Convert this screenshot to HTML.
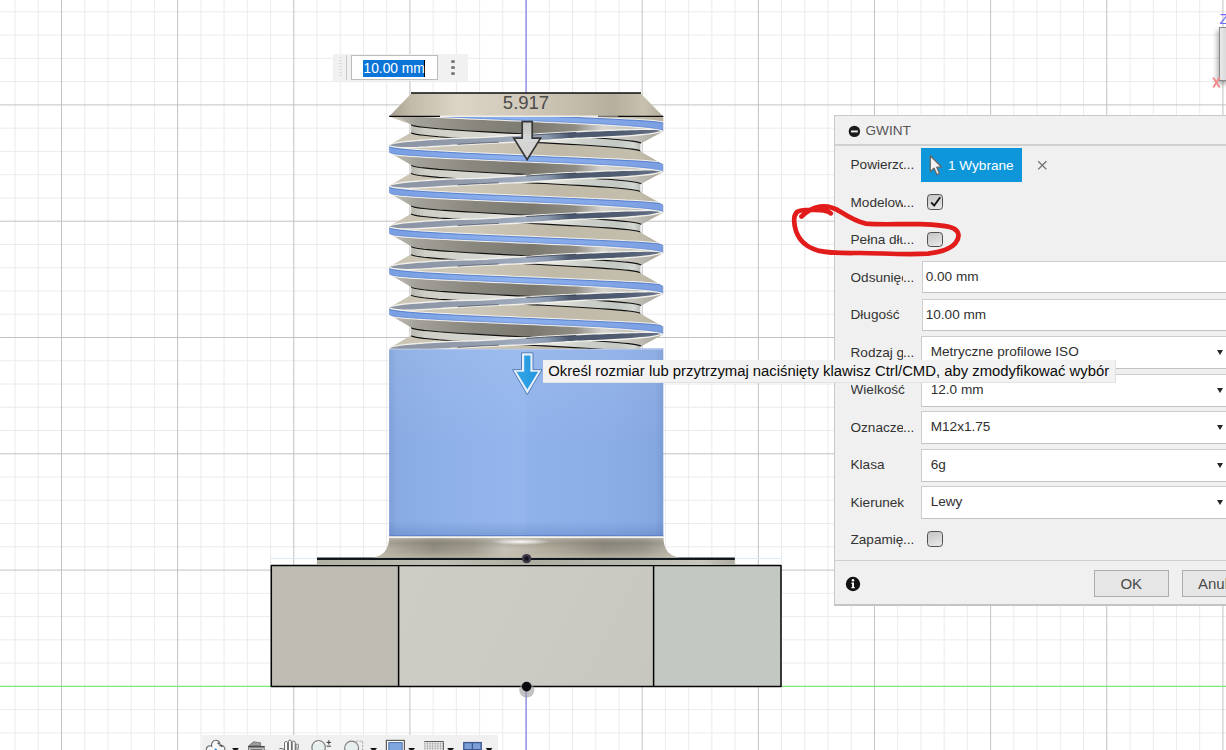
<!DOCTYPE html>
<html><head><meta charset="utf-8"><title>GWINT</title>
<style>
html,body{margin:0;padding:0;width:1226px;height:750px;overflow:hidden;background:#fff;font-family:"Liberation Sans",sans-serif;}
#root{position:relative;width:1226px;height:750px;overflow:hidden;background:#fff}
#scene{position:absolute;left:0;top:0}
.abs{position:absolute}
#dlg{position:absolute;left:834px;top:115px;width:420px;height:488px;background:#f0f0f0;border:1px solid #c9c9c9;border-bottom:2px solid #c4c4c4;box-sizing:content-box}
#dlg .hdr{position:absolute;left:0;top:0;right:0;height:28px;border-bottom:2px solid #d0d0d0}
#dlg .lbl{position:absolute;left:15.5px;font-size:13.6px;color:#333;white-space:nowrap;width:70px;overflow:hidden;line-height:18px;height:18px}
#dlg .clip{display:inline-block;width:52.5px;overflow:hidden;vertical-align:top;height:18px}
#dlg .dots{display:inline-block;vertical-align:top}
#dlg .inp{position:absolute;left:87px;width:340px;height:33px;background:#fff;border:1px solid #cdcdcd;border-bottom:1px solid #c2c2c2;box-sizing:border-box;font-size:13.6px;color:#303030;line-height:30.6px;white-space:nowrap}
#dlg .arr{position:absolute;left:381.6px;width:0;height:0;border-left:3.9px solid transparent;border-right:3.9px solid transparent;border-top:5.6px solid #262626}
.cb{position:absolute;left:92px;width:13.6px;height:13.8px;border:1.3px solid #505050;border-radius:3.6px;background:linear-gradient(160deg,#c4c4c4,#e9e9e9);box-sizing:content-box}
</style></head>
<body>
<div id="root">
<svg id="scene" width="1226" height="750" viewBox="0 0 1226 750">

<defs>
<linearGradient id="gCham" x1="389" x2="663" y1="0" y2="0" gradientUnits="userSpaceOnUse">
 <stop offset="0" stop-color="#a59e8e"/><stop offset="0.08" stop-color="#c2bbaa"/><stop offset="0.25" stop-color="#dcd5c5"/>
 <stop offset="0.5" stop-color="#d0c9b9"/><stop offset="0.68" stop-color="#c4bcab"/><stop offset="0.82" stop-color="#b7af9e"/>
 <stop offset="0.93" stop-color="#c8c1af"/><stop offset="1" stop-color="#b3ac9b"/>
</linearGradient>
<linearGradient id="gBeige" x1="389" x2="663" y1="0" y2="0" gradientUnits="userSpaceOnUse">
 <stop offset="0" stop-color="#c9c2b1"/><stop offset="0.5" stop-color="#c5beac"/><stop offset="1" stop-color="#b9b2a2"/>
</linearGradient>
<linearGradient id="gUp" x1="389" x2="663" y1="0" y2="0" gradientUnits="userSpaceOnUse">
 <stop offset="0" stop-color="#cbc4b3"/><stop offset="0.3" stop-color="#cdc7b8"/><stop offset="0.6" stop-color="#c0b9a8"/><stop offset="0.9" stop-color="#c4bead"/><stop offset="1" stop-color="#b5ae9d"/>
</linearGradient>
<linearGradient id="gLow" x1="389" x2="663" y1="0" y2="0" gradientUnits="userSpaceOnUse">
 <stop offset="0" stop-color="#c2c0b8"/><stop offset="0.1" stop-color="#a3a199"/><stop offset="0.3" stop-color="#8a877f"/><stop offset="0.52" stop-color="#7b7870"/>
 <stop offset="0.68" stop-color="#8f8c84"/><stop offset="0.78" stop-color="#d6d5d0"/><stop offset="0.9" stop-color="#c2c0b8"/><stop offset="1" stop-color="#a5a298"/>
</linearGradient>
<linearGradient id="gRoot" x1="411" x2="641" y1="0" y2="0" gradientUnits="userSpaceOnUse">
 <stop offset="0" stop-color="#b9b8b0"/><stop offset="0.06" stop-color="#cfcfc8"/><stop offset="0.3" stop-color="#d6d6d0"/><stop offset="0.45" stop-color="#eceae5"/><stop offset="0.62" stop-color="#e6e6e1"/><stop offset="0.75" stop-color="#cdd0ca"/><stop offset="0.9" stop-color="#c4c9c3"/><stop offset="0.97" stop-color="#d4d8d3"/><stop offset="1" stop-color="#b4b8b2"/>
</linearGradient>
<linearGradient id="gRH" x1="389" x2="663" y1="0" y2="0" gradientUnits="userSpaceOnUse">
 <stop offset="0" stop-color="#8b94a3"/><stop offset="0.3" stop-color="#929cad"/><stop offset="0.5" stop-color="#a0acbf"/><stop offset="0.58" stop-color="#8a98ae"/>
 <stop offset="0.66" stop-color="#4a576c"/><stop offset="0.85" stop-color="#4f5c72"/><stop offset="1" stop-color="#68758a"/>
</linearGradient>
<linearGradient id="gBlue" x1="389" x2="663" y1="0" y2="0" gradientUnits="userSpaceOnUse">
 <stop offset="0" stop-color="#7a9fe2"/><stop offset="0.45" stop-color="#8db1ee"/><stop offset="1" stop-color="#7b9fe1"/>
</linearGradient>
<linearGradient id="gCyl" x1="389" x2="663" y1="0" y2="0" gradientUnits="userSpaceOnUse">
 <stop offset="0" stop-color="#7e9fd8"/><stop offset="0.03" stop-color="#89abe3"/><stop offset="0.2" stop-color="#8fb1e9"/><stop offset="0.49" stop-color="#94b6ed"/>
 <stop offset="0.51" stop-color="#90b2ea"/><stop offset="0.8" stop-color="#8caee7"/><stop offset="0.97" stop-color="#86a8e1"/><stop offset="1" stop-color="#7b9cd6"/>
</linearGradient>
<linearGradient id="gCylV" x1="0" x2="0" y1="348" y2="536" gradientUnits="userSpaceOnUse">
 <stop offset="0" stop-color="#ffffff" stop-opacity="0.08"/><stop offset="0.5" stop-color="#ffffff" stop-opacity="0"/><stop offset="0.92" stop-color="#2d4f96" stop-opacity="0"/><stop offset="1" stop-color="#2d4f96" stop-opacity="0.22"/>
</linearGradient>
<linearGradient id="gFil" x1="372" x2="680" y1="0" y2="0" gradientUnits="userSpaceOnUse">
 <stop offset="0" stop-color="#cfcabd"/><stop offset="0.08" stop-color="#b2ad9f"/><stop offset="0.2" stop-color="#8d897d"/><stop offset="0.33" stop-color="#a39f92"/>
 <stop offset="0.43" stop-color="#d7d4cb"/><stop offset="0.5" stop-color="#c9c3b4"/><stop offset="0.6" stop-color="#b3ad9e"/><stop offset="0.75" stop-color="#8b877c"/><stop offset="0.88" stop-color="#96938a"/><stop offset="0.96" stop-color="#bdb9ae"/><stop offset="1" stop-color="#d2cec3"/>
</linearGradient>
<linearGradient id="gFilV" x1="0" x2="0" y1="537" y2="558" gradientUnits="userSpaceOnUse">
 <stop offset="0" stop-color="#efece4" stop-opacity="0.95"/><stop offset="0.1" stop-color="#a8a498" stop-opacity="0.5"/><stop offset="0.3" stop-color="#827e74" stop-opacity="0.42"/><stop offset="0.6" stop-color="#a39e90" stop-opacity="0.3"/><stop offset="1" stop-color="#c4bead" stop-opacity="0.78"/>
</linearGradient>
<radialGradient id="gFilH" cx="521" cy="541.8" r="30" gradientUnits="userSpaceOnUse" gradientTransform="translate(521 541.8) scale(1 0.107) translate(-521 -541.8)">
 <stop offset="0" stop-color="#ffffff" stop-opacity="0.95"/><stop offset="0.5" stop-color="#ffffff" stop-opacity="0.5"/><stop offset="1" stop-color="#ffffff" stop-opacity="0"/>
</radialGradient>
<linearGradient id="gFl" x1="317" x2="735" y1="0" y2="0" gradientUnits="userSpaceOnUse">
 <stop offset="0" stop-color="#b3b0a5"/><stop offset="0.3" stop-color="#c1bfb5"/><stop offset="0.5" stop-color="#b0ada2"/><stop offset="0.75" stop-color="#b6b8ae"/><stop offset="0.92" stop-color="#c9c8bd"/><stop offset="1" stop-color="#aeaca2"/>
</linearGradient>
<linearGradient id="gMid" x1="399" x2="653" y1="565" y2="686" gradientUnits="userSpaceOnUse">
 <stop offset="0" stop-color="#cdccc5"/><stop offset="0.5" stop-color="#cbcac3"/><stop offset="1" stop-color="#c8c7bf"/>
</linearGradient>
<linearGradient id="gArr" x1="0" x2="0" y1="121" y2="160" gradientUnits="userSpaceOnUse">
 <stop offset="0" stop-color="#c9c9c9"/><stop offset="0.4" stop-color="#dadada"/><stop offset="1" stop-color="#d2d2d2"/>
</linearGradient>
<linearGradient id="gBArr" x1="512" x2="542" y1="0" y2="0" gradientUnits="userSpaceOnUse">
 <stop offset="0" stop-color="#3aa6e6"/><stop offset="0.5" stop-color="#2b9ee2"/><stop offset="1" stop-color="#2290d6"/>
</linearGradient>
</defs>

<rect width="1226" height="750" fill="#fff"/>
<path d="M15.04 0V750M38.27 0V750M84.73 0V750M107.96 0V750M131.18 0V750M154.41 0V750M200.87 0V750M224.10 0V750M247.32 0V750M270.55 0V750M317.01 0V750M340.24 0V750M363.46 0V750M386.69 0V750M433.15 0V750M456.38 0V750M479.60 0V750M502.83 0V750M549.29 0V750M572.52 0V750M595.74 0V750M618.97 0V750M665.43 0V750M688.66 0V750M711.88 0V750M735.11 0V750M781.57 0V750M804.80 0V750M828.02 0V750M851.25 0V750M897.71 0V750M920.94 0V750M944.16 0V750M967.39 0V750M1013.85 0V750M1037.08 0V750M1060.30 0V750M1083.53 0V750M1129.99 0V750M1153.22 0V750M1176.44 0V750M1199.67 0V750M0 732.92H1226M0 709.66H1226M0 663.14H1226M0 639.88H1226M0 616.62H1226M0 593.36H1226M0 546.84H1226M0 523.58H1226M0 500.32H1226M0 477.06H1226M0 430.54H1226M0 407.28H1226M0 384.02H1226M0 360.76H1226M0 314.24H1226M0 290.98H1226M0 267.72H1226M0 244.46H1226M0 197.94H1226M0 174.68H1226M0 151.42H1226M0 128.16H1226M0 81.64H1226M0 58.38H1226M0 35.12H1226M0 11.86H1226" stroke="#e7e7e7" stroke-width="0.85" fill="none"/>
<path d="M61.50 0V750M177.64 0V750M293.78 0V750M409.92 0V750M526.06 0V750M642.20 0V750M758.34 0V750M874.48 0V750M990.62 0V750M1106.76 0V750M1222.90 0V750M0 686.40H1226M0 570.10H1226M0 453.80H1226M0 337.50H1226M0 221.20H1226M0 104.90H1226" stroke="#bfbfbf" stroke-width="0.95" fill="none"/>
<path d="M0 686.4H1226" stroke="#80ec80" stroke-width="1.15"/>
<path d="M526.1 0V750" stroke="#8888ee" stroke-width="1.2"/>
<path d="M271 558.5H781" stroke="#dcebf9" stroke-width="1.2"/>
<rect x="271" y="565.2" width="127.6" height="121.2" fill="#bfbcb4"/>
<rect x="398.6" y="565.2" width="255" height="121.2" fill="url(#gMid)"/>
<rect x="653.6" y="565.2" width="127.4" height="121.2" fill="#c4c8c2"/>
<path d="M271.3 565.4H781V686.4H271.3ZM398.6 565.4V686.4M653.6 565.4V686.4" fill="none" stroke="#050505" stroke-width="1.5" stroke-linejoin="round"/>
<rect x="317" y="558" width="417.8" height="7" fill="url(#gFl)"/>
<path d="M317 558.7H734.8" stroke="#10181d" stroke-width="2.35"/>
<path d="M389.2 536.5C389.5 549 383 557.6 371 557.6H681.4C669.5 557.6 663 549 663.3 536.5Z" fill="url(#gFil)"/>
<path d="M389.2 536.5C389.5 549 383 557.6 371 557.6H681.4C669.5 557.6 663 549 663.3 536.5Z" fill="url(#gFilV)"/>
<ellipse cx="521" cy="541.8" rx="30" ry="3.2" fill="url(#gFilH)"/>
<rect x="389.1" y="348.2" width="274.2" height="188" fill="url(#gCyl)"/>
<rect x="389.1" y="348.2" width="274.2" height="188" fill="url(#gCylV)"/>
<path d="M389.1 348.8H663.3" stroke="#c3d3ee" stroke-width="1.2"/>
<path d="M389.1 535.6H663.3" stroke="#5f84c9" stroke-width="1.2"/>
<path d="M389.1 537.3H663.3" stroke="#f4f2ec" stroke-width="1.6"/>
<clipPath id="thr"><path d="M389.1 116.5L411.2 124.5L411.2 132.5L389.0 145.3L389.0 152.2L411.2 165.1L411.2 173.1L389.0 185.9L389.0 192.8L411.2 205.7L411.2 213.7L389.0 226.5L389.0 233.4L411.2 246.3L411.2 254.3L389.0 267.1L389.0 274.0L411.2 286.9L411.2 294.9L389.0 307.7L389.0 314.6L411.2 327.5L411.2 335.5L389.0 348.3L389.0 355.2L389.0 400.0L663.0 400.0L640.2 354.4L640.2 346.7L663.3 334.5L663.3 326.8L640.2 313.8L640.2 306.1L663.3 293.9L663.3 286.2L640.2 273.2L640.2 265.5L663.3 253.3L663.3 245.6L640.2 232.6L640.2 224.9L663.3 212.7L663.3 205.0L640.2 192.0L640.2 184.3L663.3 172.1L663.3 164.4L640.2 151.4L640.2 143.7L663.3 131.5L663.3 123.8L663.3 116.5Z"/></clipPath>
<clipPath id="thrbox"><rect x="380" y="116.5" width="300" height="232.2"/></clipPath>
<g clip-path="url(#thrbox)"><g clip-path="url(#thr)">
<rect x="380" y="110" width="300" height="245" fill="url(#gBeige)"/>
<path d="M389.1 111.6L389.5 112.1L390.8 112.5L392.9 113.0L395.8 113.4L399.5 113.9L404.0 114.3L409.3 114.8L415.3 115.2L421.9 115.7L429.3 116.1L437.2 116.6L445.6 117.1L454.6 117.5L464.0 118.0L473.7 118.4L483.8 118.9L494.2 119.3L504.8 119.8L515.4 120.2L526.2 120.7L537.0 121.2L547.6 121.6L558.2 122.1L568.6 122.5L578.7 123.0L588.4 123.4L597.8 123.9L606.8 124.3L615.2 124.8L623.1 125.2L630.5 125.7L637.1 126.2L643.1 126.6L648.4 127.1L652.9 127.5L656.6 128.0L659.5 128.4L661.6 128.9L662.9 129.3L663.3 129.8L641.2 143.5L640.8 143.0L639.8 142.6L638.0 142.1L635.6 141.6L632.4 141.1L628.7 140.7L624.3 140.2L619.2 139.7L613.6 139.2L607.5 138.8L600.9 138.3L593.8 137.8L586.3 137.3L578.4 136.8L570.2 136.4L561.7 135.9L553.0 135.4L544.2 134.9L535.2 134.5L526.2 134.0L517.2 133.5L508.2 133.1L499.4 132.6L490.7 132.1L482.2 131.6L474.0 131.2L466.1 130.7L458.6 130.2L451.5 129.7L444.9 129.2L438.8 128.8L433.2 128.3L428.1 127.8L423.7 127.3L420.0 126.9L416.8 126.4L414.4 125.9L412.6 125.5L411.6 125.0L411.2 124.5Z" fill="url(#gLow)"/>
<path d="M411.2 91.9L411.6 92.4L412.6 92.9L414.4 93.3L416.8 93.8L420.0 94.3L423.7 94.8L428.1 95.2L433.2 95.7L438.8 96.2L444.9 96.7L451.5 97.1L458.6 97.6L466.1 98.1L474.0 98.6L482.2 99.0L490.7 99.5L499.4 100.0L508.2 100.5L517.2 100.9L526.2 101.4L535.2 101.9L544.2 102.4L553.0 102.8L561.7 103.3L570.2 103.8L578.4 104.2L586.3 104.7L593.8 105.2L600.9 105.7L607.5 106.2L613.6 106.6L619.2 107.1L624.3 107.6L628.7 108.1L632.4 108.5L635.6 109.0L638.0 109.5L639.8 110.0L640.8 110.4L641.2 110.9L663.3 124.2L662.9 123.7L661.6 123.3L659.5 122.8L656.6 122.4L652.9 121.9L648.4 121.5L643.1 121.0L637.1 120.6L630.5 120.1L623.1 119.7L615.2 119.2L606.8 118.7L597.8 118.3L588.4 117.8L578.7 117.4L568.6 116.9L558.2 116.5L547.6 116.0L537.0 115.6L526.2 115.1L515.4 114.6L504.8 114.2L494.2 113.7L483.8 113.3L473.7 112.8L464.0 112.4L454.6 111.9L445.6 111.5L437.2 111.0L429.3 110.5L421.9 110.1L415.3 109.6L409.3 109.2L404.0 108.7L399.5 108.3L395.8 107.8L392.9 107.4L390.8 106.9L389.5 106.5L389.1 106.0Z" fill="url(#gUp)"/>
<path d="M389.1 152.2L389.5 152.7L390.8 153.1L392.9 153.6L395.8 154.0L399.5 154.5L404.0 154.9L409.3 155.4L415.3 155.8L421.9 156.3L429.3 156.8L437.2 157.2L445.6 157.7L454.6 158.1L464.0 158.6L473.7 159.0L483.8 159.5L494.2 159.9L504.8 160.4L515.4 160.8L526.2 161.3L537.0 161.8L547.6 162.2L558.2 162.7L568.6 163.1L578.7 163.6L588.4 164.0L597.8 164.5L606.8 164.9L615.2 165.4L623.1 165.8L630.5 166.3L637.1 166.8L643.1 167.2L648.4 167.7L652.9 168.1L656.6 168.6L659.5 169.0L661.6 169.5L662.9 169.9L663.3 170.4L641.2 184.1L640.8 183.6L639.8 183.2L638.0 182.7L635.6 182.2L632.4 181.7L628.7 181.2L624.3 180.8L619.2 180.3L613.6 179.8L607.5 179.3L600.9 178.9L593.8 178.4L586.3 177.9L578.4 177.4L570.2 177.0L561.7 176.5L553.0 176.0L544.2 175.5L535.2 175.1L526.2 174.6L517.2 174.1L508.2 173.7L499.4 173.2L490.7 172.7L482.2 172.2L474.0 171.8L466.1 171.3L458.6 170.8L451.5 170.3L444.9 169.8L438.8 169.4L433.2 168.9L428.1 168.4L423.7 167.9L420.0 167.5L416.8 167.0L414.4 166.5L412.6 166.0L411.6 165.6L411.2 165.1Z" fill="url(#gLow)"/>
<path d="M411.2 132.5L411.6 133.0L412.6 133.4L414.4 133.9L416.8 134.4L420.0 134.9L423.7 135.3L428.1 135.8L433.2 136.3L438.8 136.8L444.9 137.2L451.5 137.7L458.6 138.2L466.1 138.7L474.0 139.2L482.2 139.6L490.7 140.1L499.4 140.6L508.2 141.1L517.2 141.5L526.2 142.0L535.2 142.5L544.2 142.9L553.0 143.4L561.7 143.9L570.2 144.4L578.4 144.8L586.3 145.3L593.8 145.8L600.9 146.3L607.5 146.8L613.6 147.2L619.2 147.7L624.3 148.2L628.7 148.7L632.4 149.1L635.6 149.6L638.0 150.1L639.8 150.6L640.8 151.0L641.2 151.5L663.3 164.8L662.9 164.3L661.6 163.9L659.5 163.4L656.6 163.0L652.9 162.5L648.4 162.1L643.1 161.6L637.1 161.2L630.5 160.7L623.1 160.2L615.2 159.8L606.8 159.3L597.8 158.9L588.4 158.4L578.7 158.0L568.6 157.5L558.2 157.1L547.6 156.6L537.0 156.2L526.2 155.7L515.4 155.2L504.8 154.8L494.2 154.3L483.8 153.9L473.7 153.4L464.0 153.0L454.6 152.5L445.6 152.1L437.2 151.6L429.3 151.2L421.9 150.7L415.3 150.2L409.3 149.8L404.0 149.3L399.5 148.9L395.8 148.4L392.9 148.0L390.8 147.5L389.5 147.1L389.1 146.6Z" fill="url(#gUp)"/>
<path d="M389.1 192.8L389.5 193.3L390.8 193.7L392.9 194.2L395.8 194.6L399.5 195.1L404.0 195.5L409.3 196.0L415.3 196.4L421.9 196.9L429.3 197.3L437.2 197.8L445.6 198.3L454.6 198.7L464.0 199.2L473.7 199.6L483.8 200.1L494.2 200.5L504.8 201.0L515.4 201.4L526.2 201.9L537.0 202.4L547.6 202.8L558.2 203.3L568.6 203.7L578.7 204.2L588.4 204.6L597.8 205.1L606.8 205.5L615.2 206.0L623.1 206.4L630.5 206.9L637.1 207.4L643.1 207.8L648.4 208.3L652.9 208.7L656.6 209.2L659.5 209.6L661.6 210.1L662.9 210.5L663.3 211.0L641.2 224.7L640.8 224.2L639.8 223.8L638.0 223.3L635.6 222.8L632.4 222.3L628.7 221.8L624.3 221.4L619.2 220.9L613.6 220.4L607.5 219.9L600.9 219.5L593.8 219.0L586.3 218.5L578.4 218.0L570.2 217.6L561.7 217.1L553.0 216.6L544.2 216.1L535.2 215.7L526.2 215.2L517.2 214.7L508.2 214.2L499.4 213.8L490.7 213.3L482.2 212.8L474.0 212.3L466.1 211.9L458.6 211.4L451.5 210.9L444.9 210.4L438.8 210.0L433.2 209.5L428.1 209.0L423.7 208.5L420.0 208.1L416.8 207.6L414.4 207.1L412.6 206.6L411.6 206.2L411.2 205.7Z" fill="url(#gLow)"/>
<path d="M411.2 173.1L411.6 173.6L412.6 174.0L414.4 174.5L416.8 175.0L420.0 175.5L423.7 175.9L428.1 176.4L433.2 176.9L438.8 177.4L444.9 177.8L451.5 178.3L458.6 178.8L466.1 179.3L474.0 179.8L482.2 180.2L490.7 180.7L499.4 181.2L508.2 181.7L517.2 182.1L526.2 182.6L535.2 183.1L544.2 183.5L553.0 184.0L561.7 184.5L570.2 185.0L578.4 185.4L586.3 185.9L593.8 186.4L600.9 186.9L607.5 187.3L613.6 187.8L619.2 188.3L624.3 188.8L628.7 189.2L632.4 189.7L635.6 190.2L638.0 190.7L639.8 191.2L640.8 191.6L641.2 192.1L663.3 205.4L662.9 204.9L661.6 204.5L659.5 204.0L656.6 203.6L652.9 203.1L648.4 202.7L643.1 202.2L637.1 201.8L630.5 201.3L623.1 200.8L615.2 200.4L606.8 199.9L597.8 199.5L588.4 199.0L578.7 198.6L568.6 198.1L558.2 197.7L547.6 197.2L537.0 196.8L526.2 196.3L515.4 195.8L504.8 195.4L494.2 194.9L483.8 194.5L473.7 194.0L464.0 193.6L454.6 193.1L445.6 192.7L437.2 192.2L429.3 191.8L421.9 191.3L415.3 190.8L409.3 190.4L404.0 189.9L399.5 189.5L395.8 189.0L392.9 188.6L390.8 188.1L389.5 187.7L389.1 187.2Z" fill="url(#gUp)"/>
<path d="M389.1 233.4L389.5 233.9L390.8 234.3L392.9 234.8L395.8 235.2L399.5 235.7L404.0 236.1L409.3 236.6L415.3 237.0L421.9 237.5L429.3 237.9L437.2 238.4L445.6 238.9L454.6 239.3L464.0 239.8L473.7 240.2L483.8 240.7L494.2 241.1L504.8 241.6L515.4 242.0L526.2 242.5L537.0 243.0L547.6 243.4L558.2 243.9L568.6 244.3L578.7 244.8L588.4 245.2L597.8 245.7L606.8 246.1L615.2 246.6L623.1 247.0L630.5 247.5L637.1 248.0L643.1 248.4L648.4 248.9L652.9 249.3L656.6 249.8L659.5 250.2L661.6 250.7L662.9 251.1L663.3 251.6L641.2 265.3L640.8 264.8L639.8 264.4L638.0 263.9L635.6 263.4L632.4 262.9L628.7 262.4L624.3 262.0L619.2 261.5L613.6 261.0L607.5 260.6L600.9 260.1L593.8 259.6L586.3 259.1L578.4 258.7L570.2 258.2L561.7 257.7L553.0 257.2L544.2 256.8L535.2 256.3L526.2 255.8L517.2 255.3L508.2 254.9L499.4 254.4L490.7 253.9L482.2 253.4L474.0 253.0L466.1 252.5L458.6 252.0L451.5 251.5L444.9 251.1L438.8 250.6L433.2 250.1L428.1 249.6L423.7 249.2L420.0 248.7L416.8 248.2L414.4 247.7L412.6 247.2L411.6 246.8L411.2 246.3Z" fill="url(#gLow)"/>
<path d="M411.2 213.7L411.6 214.2L412.6 214.6L414.4 215.1L416.8 215.6L420.0 216.1L423.7 216.5L428.1 217.0L433.2 217.5L438.8 218.0L444.9 218.4L451.5 218.9L458.6 219.4L466.1 219.9L474.0 220.3L482.2 220.8L490.7 221.3L499.4 221.8L508.2 222.2L517.2 222.7L526.2 223.2L535.2 223.7L544.2 224.1L553.0 224.6L561.7 225.1L570.2 225.6L578.4 226.0L586.3 226.5L593.8 227.0L600.9 227.5L607.5 227.9L613.6 228.4L619.2 228.9L624.3 229.4L628.7 229.8L632.4 230.3L635.6 230.8L638.0 231.3L639.8 231.8L640.8 232.2L641.2 232.7L663.3 246.0L662.9 245.5L661.6 245.1L659.5 244.6L656.6 244.2L652.9 243.7L648.4 243.3L643.1 242.8L637.1 242.4L630.5 241.9L623.1 241.5L615.2 241.0L606.8 240.5L597.8 240.1L588.4 239.6L578.7 239.2L568.6 238.7L558.2 238.3L547.6 237.8L537.0 237.4L526.2 236.9L515.4 236.4L504.8 236.0L494.2 235.5L483.8 235.1L473.7 234.6L464.0 234.2L454.6 233.7L445.6 233.3L437.2 232.8L429.3 232.4L421.9 231.9L415.3 231.4L409.3 231.0L404.0 230.5L399.5 230.1L395.8 229.6L392.9 229.2L390.8 228.7L389.5 228.3L389.1 227.8Z" fill="url(#gUp)"/>
<path d="M389.1 274.0L389.5 274.5L390.8 274.9L392.9 275.4L395.8 275.8L399.5 276.3L404.0 276.7L409.3 277.2L415.3 277.6L421.9 278.1L429.3 278.6L437.2 279.0L445.6 279.5L454.6 279.9L464.0 280.4L473.7 280.8L483.8 281.3L494.2 281.7L504.8 282.2L515.4 282.6L526.2 283.1L537.0 283.6L547.6 284.0L558.2 284.5L568.6 284.9L578.7 285.4L588.4 285.8L597.8 286.3L606.8 286.7L615.2 287.2L623.1 287.6L630.5 288.1L637.1 288.6L643.1 289.0L648.4 289.5L652.9 289.9L656.6 290.4L659.5 290.8L661.6 291.3L662.9 291.7L663.3 292.2L641.2 305.9L640.8 305.4L639.8 304.9L638.0 304.5L635.6 304.0L632.4 303.5L628.7 303.0L624.3 302.6L619.2 302.1L613.6 301.6L607.5 301.1L600.9 300.7L593.8 300.2L586.3 299.7L578.4 299.2L570.2 298.8L561.7 298.3L553.0 297.8L544.2 297.3L535.2 296.9L526.2 296.4L517.2 295.9L508.2 295.4L499.4 295.0L490.7 294.5L482.2 294.0L474.0 293.5L466.1 293.1L458.6 292.6L451.5 292.1L444.9 291.6L438.8 291.2L433.2 290.7L428.1 290.2L423.7 289.8L420.0 289.3L416.8 288.8L414.4 288.3L412.6 287.8L411.6 287.4L411.2 286.9Z" fill="url(#gLow)"/>
<path d="M411.2 254.3L411.6 254.8L412.6 255.2L414.4 255.7L416.8 256.2L420.0 256.7L423.7 257.2L428.1 257.6L433.2 258.1L438.8 258.6L444.9 259.1L451.5 259.5L458.6 260.0L466.1 260.5L474.0 260.9L482.2 261.4L490.7 261.9L499.4 262.4L508.2 262.9L517.2 263.3L526.2 263.8L535.2 264.3L544.2 264.8L553.0 265.2L561.7 265.7L570.2 266.2L578.4 266.7L586.3 267.1L593.8 267.6L600.9 268.1L607.5 268.6L613.6 269.0L619.2 269.5L624.3 270.0L628.7 270.4L632.4 270.9L635.6 271.4L638.0 271.9L639.8 272.4L640.8 272.8L641.2 273.3L663.3 286.6L662.9 286.1L661.6 285.7L659.5 285.2L656.6 284.8L652.9 284.3L648.4 283.9L643.1 283.4L637.1 283.0L630.5 282.5L623.1 282.0L615.2 281.6L606.8 281.1L597.8 280.7L588.4 280.2L578.7 279.8L568.6 279.3L558.2 278.9L547.6 278.4L537.0 278.0L526.2 277.5L515.4 277.0L504.8 276.6L494.2 276.1L483.8 275.7L473.7 275.2L464.0 274.8L454.6 274.3L445.6 273.9L437.2 273.4L429.3 272.9L421.9 272.5L415.3 272.0L409.3 271.6L404.0 271.1L399.5 270.7L395.8 270.2L392.9 269.8L390.8 269.3L389.5 268.9L389.1 268.4Z" fill="url(#gUp)"/>
<path d="M389.1 314.6L389.5 315.1L390.8 315.5L392.9 316.0L395.8 316.4L399.5 316.9L404.0 317.3L409.3 317.8L415.3 318.2L421.9 318.7L429.3 319.2L437.2 319.6L445.6 320.1L454.6 320.5L464.0 321.0L473.7 321.4L483.8 321.9L494.2 322.3L504.8 322.8L515.4 323.2L526.2 323.7L537.0 324.2L547.6 324.6L558.2 325.1L568.6 325.5L578.7 326.0L588.4 326.4L597.8 326.9L606.8 327.3L615.2 327.8L623.1 328.2L630.5 328.7L637.1 329.2L643.1 329.6L648.4 330.1L652.9 330.5L656.6 331.0L659.5 331.4L661.6 331.9L662.9 332.3L663.3 332.8L641.2 346.5L640.8 346.0L639.8 345.6L638.0 345.1L635.6 344.6L632.4 344.1L628.7 343.6L624.3 343.2L619.2 342.7L613.6 342.2L607.5 341.8L600.9 341.3L593.8 340.8L586.3 340.3L578.4 339.9L570.2 339.4L561.7 338.9L553.0 338.4L544.2 337.9L535.2 337.5L526.2 337.0L517.2 336.5L508.2 336.1L499.4 335.6L490.7 335.1L482.2 334.6L474.0 334.1L466.1 333.7L458.6 333.2L451.5 332.7L444.9 332.2L438.8 331.8L433.2 331.3L428.1 330.8L423.7 330.4L420.0 329.9L416.8 329.4L414.4 328.9L412.6 328.4L411.6 328.0L411.2 327.5Z" fill="url(#gLow)"/>
<path d="M411.2 294.9L411.6 295.4L412.6 295.8L414.4 296.3L416.8 296.8L420.0 297.3L423.7 297.8L428.1 298.2L433.2 298.7L438.8 299.2L444.9 299.6L451.5 300.1L458.6 300.6L466.1 301.1L474.0 301.5L482.2 302.0L490.7 302.5L499.4 303.0L508.2 303.4L517.2 303.9L526.2 304.4L535.2 304.9L544.2 305.3L553.0 305.8L561.7 306.3L570.2 306.8L578.4 307.2L586.3 307.7L593.8 308.2L600.9 308.7L607.5 309.1L613.6 309.6L619.2 310.1L624.3 310.6L628.7 311.0L632.4 311.5L635.6 312.0L638.0 312.5L639.8 312.9L640.8 313.4L641.2 313.9L663.3 327.2L662.9 326.7L661.6 326.3L659.5 325.8L656.6 325.4L652.9 324.9L648.4 324.5L643.1 324.0L637.1 323.6L630.5 323.1L623.1 322.6L615.2 322.2L606.8 321.7L597.8 321.3L588.4 320.8L578.7 320.4L568.6 319.9L558.2 319.5L547.6 319.0L537.0 318.6L526.2 318.1L515.4 317.6L504.8 317.2L494.2 316.7L483.8 316.3L473.7 315.8L464.0 315.4L454.6 314.9L445.6 314.5L437.2 314.0L429.3 313.6L421.9 313.1L415.3 312.6L409.3 312.2L404.0 311.7L399.5 311.3L395.8 310.8L392.9 310.4L390.8 309.9L389.5 309.5L389.1 309.0Z" fill="url(#gUp)"/>
<path d="M389.1 355.2L389.5 355.7L390.8 356.1L392.9 356.6L395.8 357.0L399.5 357.5L404.0 357.9L409.3 358.4L415.3 358.8L421.9 359.3L429.3 359.8L437.2 360.2L445.6 360.7L454.6 361.1L464.0 361.6L473.7 362.0L483.8 362.5L494.2 362.9L504.8 363.4L515.4 363.8L526.2 364.3L537.0 364.8L547.6 365.2L558.2 365.7L568.6 366.1L578.7 366.6L588.4 367.0L597.8 367.5L606.8 367.9L615.2 368.4L623.1 368.8L630.5 369.3L637.1 369.8L643.1 370.2L648.4 370.7L652.9 371.1L656.6 371.6L659.5 372.0L661.6 372.5L662.9 372.9L663.3 373.4L641.2 387.1L640.8 386.6L639.8 386.2L638.0 385.7L635.6 385.2L632.4 384.7L628.7 384.2L624.3 383.8L619.2 383.3L613.6 382.8L607.5 382.4L600.9 381.9L593.8 381.4L586.3 380.9L578.4 380.5L570.2 380.0L561.7 379.5L553.0 379.0L544.2 378.6L535.2 378.1L526.2 377.6L517.2 377.1L508.2 376.7L499.4 376.2L490.7 375.7L482.2 375.2L474.0 374.8L466.1 374.3L458.6 373.8L451.5 373.3L444.9 372.9L438.8 372.4L433.2 371.9L428.1 371.4L423.7 371.0L420.0 370.5L416.8 370.0L414.4 369.5L412.6 369.1L411.6 368.6L411.2 368.1Z" fill="url(#gLow)"/>
<path d="M411.2 335.5L411.6 336.0L412.6 336.4L414.4 336.9L416.8 337.4L420.0 337.9L423.7 338.4L428.1 338.8L433.2 339.3L438.8 339.8L444.9 340.2L451.5 340.7L458.6 341.2L466.1 341.7L474.0 342.1L482.2 342.6L490.7 343.1L499.4 343.6L508.2 344.1L517.2 344.5L526.2 345.0L535.2 345.5L544.2 345.9L553.0 346.4L561.7 346.9L570.2 347.4L578.4 347.9L586.3 348.3L593.8 348.8L600.9 349.3L607.5 349.8L613.6 350.2L619.2 350.7L624.3 351.2L628.7 351.6L632.4 352.1L635.6 352.6L638.0 353.1L639.8 353.6L640.8 354.0L641.2 354.5L663.3 367.8L662.9 367.3L661.6 366.9L659.5 366.4L656.6 366.0L652.9 365.5L648.4 365.1L643.1 364.6L637.1 364.2L630.5 363.7L623.1 363.2L615.2 362.8L606.8 362.3L597.8 361.9L588.4 361.4L578.7 361.0L568.6 360.5L558.2 360.1L547.6 359.6L537.0 359.2L526.2 358.7L515.4 358.2L504.8 357.8L494.2 357.3L483.8 356.9L473.7 356.4L464.0 356.0L454.6 355.5L445.6 355.1L437.2 354.6L429.3 354.2L421.9 353.7L415.3 353.2L409.3 352.8L404.0 352.3L399.5 351.9L395.8 351.4L392.9 351.0L390.8 350.5L389.5 350.1L389.1 349.6Z" fill="url(#gUp)"/>
<path d="M411.2 83.9L411.6 84.4L412.6 84.9L414.4 85.3L416.8 85.8L420.0 86.3L423.7 86.8L428.1 87.2L433.2 87.7L438.8 88.2L444.9 88.7L451.5 89.1L458.6 89.6L466.1 90.1L474.0 90.6L482.2 91.0L490.7 91.5L499.4 92.0L508.2 92.5L517.2 92.9L526.2 93.4L535.2 93.9L544.2 94.4L553.0 94.8L561.7 95.3L570.2 95.8L578.4 96.2L586.3 96.7L593.8 97.2L600.9 97.7L607.5 98.2L613.6 98.6L619.2 99.1L624.3 99.6L628.7 100.1L632.4 100.5L635.6 101.0L638.0 101.5L639.8 102.0L640.8 102.4L641.2 102.9L641.2 110.9L640.8 110.4L639.8 110.0L638.0 109.5L635.6 109.0L632.4 108.5L628.7 108.1L624.3 107.6L619.2 107.1L613.6 106.6L607.5 106.2L600.9 105.7L593.8 105.2L586.3 104.7L578.4 104.2L570.2 103.8L561.7 103.3L553.0 102.8L544.2 102.4L535.2 101.9L526.2 101.4L517.2 100.9L508.2 100.5L499.4 100.0L490.7 99.5L482.2 99.0L474.0 98.6L466.1 98.1L458.6 97.6L451.5 97.1L444.9 96.7L438.8 96.2L433.2 95.7L428.1 95.2L423.7 94.8L420.0 94.3L416.8 93.8L414.4 93.3L412.6 92.9L411.6 92.4L411.2 91.9Z" fill="url(#gRoot)"/>
<path d="M411.2 83.9L411.6 84.4L412.6 84.9L414.4 85.3L416.8 85.8L420.0 86.3L423.7 86.8L428.1 87.2L433.2 87.7L438.8 88.2L444.9 88.7L451.5 89.1L458.6 89.6L466.1 90.1L474.0 90.6L482.2 91.0L490.7 91.5L499.4 92.0L508.2 92.5L517.2 92.9L526.2 93.4L535.2 93.9L544.2 94.4L553.0 94.8L561.7 95.3L570.2 95.8L578.4 96.2L586.3 96.7L593.8 97.2L600.9 97.7L607.5 98.2L613.6 98.6L619.2 99.1L624.3 99.6L628.7 100.1L632.4 100.5L635.6 101.0L638.0 101.5L639.8 102.0L640.8 102.4L641.2 102.9" fill="none" stroke="#111" stroke-width="1.1"/>
<path d="M411.2 91.9L411.6 92.4L412.6 92.9L414.4 93.3L416.8 93.8L420.0 94.3L423.7 94.8L428.1 95.2L433.2 95.7L438.8 96.2L444.9 96.7L451.5 97.1L458.6 97.6L466.1 98.1L474.0 98.6L482.2 99.0L490.7 99.5L499.4 100.0L508.2 100.5L517.2 100.9L526.2 101.4L535.2 101.9L544.2 102.4L553.0 102.8L561.7 103.3L570.2 103.8L578.4 104.2L586.3 104.7L593.8 105.2L600.9 105.7L607.5 106.2L613.6 106.6L619.2 107.1L624.3 107.6L628.7 108.1L632.4 108.5L635.6 109.0L638.0 109.5L639.8 110.0L640.8 110.4L641.2 110.9" fill="none" stroke="#111" stroke-width="1.1"/>
<path d="M411.2 124.5L411.6 125.0L412.6 125.5L414.4 125.9L416.8 126.4L420.0 126.9L423.7 127.3L428.1 127.8L433.2 128.3L438.8 128.8L444.9 129.2L451.5 129.7L458.6 130.2L466.1 130.7L474.0 131.2L482.2 131.6L490.7 132.1L499.4 132.6L508.2 133.1L517.2 133.5L526.2 134.0L535.2 134.5L544.2 134.9L553.0 135.4L561.7 135.9L570.2 136.4L578.4 136.8L586.3 137.3L593.8 137.8L600.9 138.3L607.5 138.8L613.6 139.2L619.2 139.7L624.3 140.2L628.7 140.7L632.4 141.1L635.6 141.6L638.0 142.1L639.8 142.6L640.8 143.0L641.2 143.5L641.2 151.5L640.8 151.0L639.8 150.6L638.0 150.1L635.6 149.6L632.4 149.1L628.7 148.7L624.3 148.2L619.2 147.7L613.6 147.2L607.5 146.8L600.9 146.3L593.8 145.8L586.3 145.3L578.4 144.8L570.2 144.4L561.7 143.9L553.0 143.4L544.2 142.9L535.2 142.5L526.2 142.0L517.2 141.5L508.2 141.1L499.4 140.6L490.7 140.1L482.2 139.6L474.0 139.2L466.1 138.7L458.6 138.2L451.5 137.7L444.9 137.2L438.8 136.8L433.2 136.3L428.1 135.8L423.7 135.3L420.0 134.9L416.8 134.4L414.4 133.9L412.6 133.4L411.6 133.0L411.2 132.5Z" fill="url(#gRoot)"/>
<path d="M411.2 124.5L411.6 125.0L412.6 125.5L414.4 125.9L416.8 126.4L420.0 126.9L423.7 127.3L428.1 127.8L433.2 128.3L438.8 128.8L444.9 129.2L451.5 129.7L458.6 130.2L466.1 130.7L474.0 131.2L482.2 131.6L490.7 132.1L499.4 132.6L508.2 133.1L517.2 133.5L526.2 134.0L535.2 134.5L544.2 134.9L553.0 135.4L561.7 135.9L570.2 136.4L578.4 136.8L586.3 137.3L593.8 137.8L600.9 138.3L607.5 138.8L613.6 139.2L619.2 139.7L624.3 140.2L628.7 140.7L632.4 141.1L635.6 141.6L638.0 142.1L639.8 142.6L640.8 143.0L641.2 143.5" fill="none" stroke="#111" stroke-width="1.1"/>
<path d="M411.2 132.5L411.6 133.0L412.6 133.4L414.4 133.9L416.8 134.4L420.0 134.9L423.7 135.3L428.1 135.8L433.2 136.3L438.8 136.8L444.9 137.2L451.5 137.7L458.6 138.2L466.1 138.7L474.0 139.2L482.2 139.6L490.7 140.1L499.4 140.6L508.2 141.1L517.2 141.5L526.2 142.0L535.2 142.5L544.2 142.9L553.0 143.4L561.7 143.9L570.2 144.4L578.4 144.8L586.3 145.3L593.8 145.8L600.9 146.3L607.5 146.8L613.6 147.2L619.2 147.7L624.3 148.2L628.7 148.7L632.4 149.1L635.6 149.6L638.0 150.1L639.8 150.6L640.8 151.0L641.2 151.5" fill="none" stroke="#111" stroke-width="1.1"/>
<path d="M411.2 165.1L411.6 165.6L412.6 166.0L414.4 166.5L416.8 167.0L420.0 167.5L423.7 167.9L428.1 168.4L433.2 168.9L438.8 169.4L444.9 169.8L451.5 170.3L458.6 170.8L466.1 171.3L474.0 171.8L482.2 172.2L490.7 172.7L499.4 173.2L508.2 173.7L517.2 174.1L526.2 174.6L535.2 175.1L544.2 175.5L553.0 176.0L561.7 176.5L570.2 177.0L578.4 177.4L586.3 177.9L593.8 178.4L600.9 178.9L607.5 179.3L613.6 179.8L619.2 180.3L624.3 180.8L628.7 181.2L632.4 181.7L635.6 182.2L638.0 182.7L639.8 183.2L640.8 183.6L641.2 184.1L641.2 192.1L640.8 191.6L639.8 191.2L638.0 190.7L635.6 190.2L632.4 189.7L628.7 189.2L624.3 188.8L619.2 188.3L613.6 187.8L607.5 187.3L600.9 186.9L593.8 186.4L586.3 185.9L578.4 185.4L570.2 185.0L561.7 184.5L553.0 184.0L544.2 183.5L535.2 183.1L526.2 182.6L517.2 182.1L508.2 181.7L499.4 181.2L490.7 180.7L482.2 180.2L474.0 179.8L466.1 179.3L458.6 178.8L451.5 178.3L444.9 177.8L438.8 177.4L433.2 176.9L428.1 176.4L423.7 175.9L420.0 175.5L416.8 175.0L414.4 174.5L412.6 174.0L411.6 173.6L411.2 173.1Z" fill="url(#gRoot)"/>
<path d="M411.2 165.1L411.6 165.6L412.6 166.0L414.4 166.5L416.8 167.0L420.0 167.5L423.7 167.9L428.1 168.4L433.2 168.9L438.8 169.4L444.9 169.8L451.5 170.3L458.6 170.8L466.1 171.3L474.0 171.8L482.2 172.2L490.7 172.7L499.4 173.2L508.2 173.7L517.2 174.1L526.2 174.6L535.2 175.1L544.2 175.5L553.0 176.0L561.7 176.5L570.2 177.0L578.4 177.4L586.3 177.9L593.8 178.4L600.9 178.9L607.5 179.3L613.6 179.8L619.2 180.3L624.3 180.8L628.7 181.2L632.4 181.7L635.6 182.2L638.0 182.7L639.8 183.2L640.8 183.6L641.2 184.1" fill="none" stroke="#111" stroke-width="1.1"/>
<path d="M411.2 173.1L411.6 173.6L412.6 174.0L414.4 174.5L416.8 175.0L420.0 175.5L423.7 175.9L428.1 176.4L433.2 176.9L438.8 177.4L444.9 177.8L451.5 178.3L458.6 178.8L466.1 179.3L474.0 179.8L482.2 180.2L490.7 180.7L499.4 181.2L508.2 181.7L517.2 182.1L526.2 182.6L535.2 183.1L544.2 183.5L553.0 184.0L561.7 184.5L570.2 185.0L578.4 185.4L586.3 185.9L593.8 186.4L600.9 186.9L607.5 187.3L613.6 187.8L619.2 188.3L624.3 188.8L628.7 189.2L632.4 189.7L635.6 190.2L638.0 190.7L639.8 191.2L640.8 191.6L641.2 192.1" fill="none" stroke="#111" stroke-width="1.1"/>
<path d="M411.2 205.7L411.6 206.2L412.6 206.6L414.4 207.1L416.8 207.6L420.0 208.1L423.7 208.5L428.1 209.0L433.2 209.5L438.8 210.0L444.9 210.4L451.5 210.9L458.6 211.4L466.1 211.9L474.0 212.3L482.2 212.8L490.7 213.3L499.4 213.8L508.2 214.2L517.2 214.7L526.2 215.2L535.2 215.7L544.2 216.1L553.0 216.6L561.7 217.1L570.2 217.6L578.4 218.0L586.3 218.5L593.8 219.0L600.9 219.5L607.5 219.9L613.6 220.4L619.2 220.9L624.3 221.4L628.7 221.8L632.4 222.3L635.6 222.8L638.0 223.3L639.8 223.8L640.8 224.2L641.2 224.7L641.2 232.7L640.8 232.2L639.8 231.8L638.0 231.3L635.6 230.8L632.4 230.3L628.7 229.8L624.3 229.4L619.2 228.9L613.6 228.4L607.5 227.9L600.9 227.5L593.8 227.0L586.3 226.5L578.4 226.0L570.2 225.6L561.7 225.1L553.0 224.6L544.2 224.1L535.2 223.7L526.2 223.2L517.2 222.7L508.2 222.2L499.4 221.8L490.7 221.3L482.2 220.8L474.0 220.3L466.1 219.9L458.6 219.4L451.5 218.9L444.9 218.4L438.8 218.0L433.2 217.5L428.1 217.0L423.7 216.5L420.0 216.1L416.8 215.6L414.4 215.1L412.6 214.6L411.6 214.2L411.2 213.7Z" fill="url(#gRoot)"/>
<path d="M411.2 205.7L411.6 206.2L412.6 206.6L414.4 207.1L416.8 207.6L420.0 208.1L423.7 208.5L428.1 209.0L433.2 209.5L438.8 210.0L444.9 210.4L451.5 210.9L458.6 211.4L466.1 211.9L474.0 212.3L482.2 212.8L490.7 213.3L499.4 213.8L508.2 214.2L517.2 214.7L526.2 215.2L535.2 215.7L544.2 216.1L553.0 216.6L561.7 217.1L570.2 217.6L578.4 218.0L586.3 218.5L593.8 219.0L600.9 219.5L607.5 219.9L613.6 220.4L619.2 220.9L624.3 221.4L628.7 221.8L632.4 222.3L635.6 222.8L638.0 223.3L639.8 223.8L640.8 224.2L641.2 224.7" fill="none" stroke="#111" stroke-width="1.1"/>
<path d="M411.2 213.7L411.6 214.2L412.6 214.6L414.4 215.1L416.8 215.6L420.0 216.1L423.7 216.5L428.1 217.0L433.2 217.5L438.8 218.0L444.9 218.4L451.5 218.9L458.6 219.4L466.1 219.9L474.0 220.3L482.2 220.8L490.7 221.3L499.4 221.8L508.2 222.2L517.2 222.7L526.2 223.2L535.2 223.7L544.2 224.1L553.0 224.6L561.7 225.1L570.2 225.6L578.4 226.0L586.3 226.5L593.8 227.0L600.9 227.5L607.5 227.9L613.6 228.4L619.2 228.9L624.3 229.4L628.7 229.8L632.4 230.3L635.6 230.8L638.0 231.3L639.8 231.8L640.8 232.2L641.2 232.7" fill="none" stroke="#111" stroke-width="1.1"/>
<path d="M411.2 246.3L411.6 246.8L412.6 247.2L414.4 247.7L416.8 248.2L420.0 248.7L423.7 249.2L428.1 249.6L433.2 250.1L438.8 250.6L444.9 251.1L451.5 251.5L458.6 252.0L466.1 252.5L474.0 253.0L482.2 253.4L490.7 253.9L499.4 254.4L508.2 254.9L517.2 255.3L526.2 255.8L535.2 256.3L544.2 256.8L553.0 257.2L561.7 257.7L570.2 258.2L578.4 258.7L586.3 259.1L593.8 259.6L600.9 260.1L607.5 260.6L613.6 261.0L619.2 261.5L624.3 262.0L628.7 262.4L632.4 262.9L635.6 263.4L638.0 263.9L639.8 264.4L640.8 264.8L641.2 265.3L641.2 273.3L640.8 272.8L639.8 272.4L638.0 271.9L635.6 271.4L632.4 270.9L628.7 270.4L624.3 270.0L619.2 269.5L613.6 269.0L607.5 268.6L600.9 268.1L593.8 267.6L586.3 267.1L578.4 266.7L570.2 266.2L561.7 265.7L553.0 265.2L544.2 264.8L535.2 264.3L526.2 263.8L517.2 263.3L508.2 262.9L499.4 262.4L490.7 261.9L482.2 261.4L474.0 260.9L466.1 260.5L458.6 260.0L451.5 259.5L444.9 259.1L438.8 258.6L433.2 258.1L428.1 257.6L423.7 257.2L420.0 256.7L416.8 256.2L414.4 255.7L412.6 255.2L411.6 254.8L411.2 254.3Z" fill="url(#gRoot)"/>
<path d="M411.2 246.3L411.6 246.8L412.6 247.2L414.4 247.7L416.8 248.2L420.0 248.7L423.7 249.2L428.1 249.6L433.2 250.1L438.8 250.6L444.9 251.1L451.5 251.5L458.6 252.0L466.1 252.5L474.0 253.0L482.2 253.4L490.7 253.9L499.4 254.4L508.2 254.9L517.2 255.3L526.2 255.8L535.2 256.3L544.2 256.8L553.0 257.2L561.7 257.7L570.2 258.2L578.4 258.7L586.3 259.1L593.8 259.6L600.9 260.1L607.5 260.6L613.6 261.0L619.2 261.5L624.3 262.0L628.7 262.4L632.4 262.9L635.6 263.4L638.0 263.9L639.8 264.4L640.8 264.8L641.2 265.3" fill="none" stroke="#111" stroke-width="1.1"/>
<path d="M411.2 254.3L411.6 254.8L412.6 255.2L414.4 255.7L416.8 256.2L420.0 256.7L423.7 257.2L428.1 257.6L433.2 258.1L438.8 258.6L444.9 259.1L451.5 259.5L458.6 260.0L466.1 260.5L474.0 260.9L482.2 261.4L490.7 261.9L499.4 262.4L508.2 262.9L517.2 263.3L526.2 263.8L535.2 264.3L544.2 264.8L553.0 265.2L561.7 265.7L570.2 266.2L578.4 266.7L586.3 267.1L593.8 267.6L600.9 268.1L607.5 268.6L613.6 269.0L619.2 269.5L624.3 270.0L628.7 270.4L632.4 270.9L635.6 271.4L638.0 271.9L639.8 272.4L640.8 272.8L641.2 273.3" fill="none" stroke="#111" stroke-width="1.1"/>
<path d="M411.2 286.9L411.6 287.4L412.6 287.8L414.4 288.3L416.8 288.8L420.0 289.3L423.7 289.8L428.1 290.2L433.2 290.7L438.8 291.2L444.9 291.6L451.5 292.1L458.6 292.6L466.1 293.1L474.0 293.5L482.2 294.0L490.7 294.5L499.4 295.0L508.2 295.4L517.2 295.9L526.2 296.4L535.2 296.9L544.2 297.3L553.0 297.8L561.7 298.3L570.2 298.8L578.4 299.2L586.3 299.7L593.8 300.2L600.9 300.7L607.5 301.1L613.6 301.6L619.2 302.1L624.3 302.6L628.7 303.0L632.4 303.5L635.6 304.0L638.0 304.5L639.8 304.9L640.8 305.4L641.2 305.9L641.2 313.9L640.8 313.4L639.8 312.9L638.0 312.5L635.6 312.0L632.4 311.5L628.7 311.0L624.3 310.6L619.2 310.1L613.6 309.6L607.5 309.1L600.9 308.7L593.8 308.2L586.3 307.7L578.4 307.2L570.2 306.8L561.7 306.3L553.0 305.8L544.2 305.3L535.2 304.9L526.2 304.4L517.2 303.9L508.2 303.4L499.4 303.0L490.7 302.5L482.2 302.0L474.0 301.5L466.1 301.1L458.6 300.6L451.5 300.1L444.9 299.6L438.8 299.2L433.2 298.7L428.1 298.2L423.7 297.8L420.0 297.3L416.8 296.8L414.4 296.3L412.6 295.8L411.6 295.4L411.2 294.9Z" fill="url(#gRoot)"/>
<path d="M411.2 286.9L411.6 287.4L412.6 287.8L414.4 288.3L416.8 288.8L420.0 289.3L423.7 289.8L428.1 290.2L433.2 290.7L438.8 291.2L444.9 291.6L451.5 292.1L458.6 292.6L466.1 293.1L474.0 293.5L482.2 294.0L490.7 294.5L499.4 295.0L508.2 295.4L517.2 295.9L526.2 296.4L535.2 296.9L544.2 297.3L553.0 297.8L561.7 298.3L570.2 298.8L578.4 299.2L586.3 299.7L593.8 300.2L600.9 300.7L607.5 301.1L613.6 301.6L619.2 302.1L624.3 302.6L628.7 303.0L632.4 303.5L635.6 304.0L638.0 304.5L639.8 304.9L640.8 305.4L641.2 305.9" fill="none" stroke="#111" stroke-width="1.1"/>
<path d="M411.2 294.9L411.6 295.4L412.6 295.8L414.4 296.3L416.8 296.8L420.0 297.3L423.7 297.8L428.1 298.2L433.2 298.7L438.8 299.2L444.9 299.6L451.5 300.1L458.6 300.6L466.1 301.1L474.0 301.5L482.2 302.0L490.7 302.5L499.4 303.0L508.2 303.4L517.2 303.9L526.2 304.4L535.2 304.9L544.2 305.3L553.0 305.8L561.7 306.3L570.2 306.8L578.4 307.2L586.3 307.7L593.8 308.2L600.9 308.7L607.5 309.1L613.6 309.6L619.2 310.1L624.3 310.6L628.7 311.0L632.4 311.5L635.6 312.0L638.0 312.5L639.8 312.9L640.8 313.4L641.2 313.9" fill="none" stroke="#111" stroke-width="1.1"/>
<path d="M411.2 327.5L411.6 328.0L412.6 328.4L414.4 328.9L416.8 329.4L420.0 329.9L423.7 330.4L428.1 330.8L433.2 331.3L438.8 331.8L444.9 332.2L451.5 332.7L458.6 333.2L466.1 333.7L474.0 334.1L482.2 334.6L490.7 335.1L499.4 335.6L508.2 336.1L517.2 336.5L526.2 337.0L535.2 337.5L544.2 337.9L553.0 338.4L561.7 338.9L570.2 339.4L578.4 339.9L586.3 340.3L593.8 340.8L600.9 341.3L607.5 341.8L613.6 342.2L619.2 342.7L624.3 343.2L628.7 343.6L632.4 344.1L635.6 344.6L638.0 345.1L639.8 345.6L640.8 346.0L641.2 346.5L641.2 354.5L640.8 354.0L639.8 353.6L638.0 353.1L635.6 352.6L632.4 352.1L628.7 351.6L624.3 351.2L619.2 350.7L613.6 350.2L607.5 349.8L600.9 349.3L593.8 348.8L586.3 348.3L578.4 347.9L570.2 347.4L561.7 346.9L553.0 346.4L544.2 345.9L535.2 345.5L526.2 345.0L517.2 344.5L508.2 344.1L499.4 343.6L490.7 343.1L482.2 342.6L474.0 342.1L466.1 341.7L458.6 341.2L451.5 340.7L444.9 340.2L438.8 339.8L433.2 339.3L428.1 338.8L423.7 338.4L420.0 337.9L416.8 337.4L414.4 336.9L412.6 336.4L411.6 336.0L411.2 335.5Z" fill="url(#gRoot)"/>
<path d="M411.2 327.5L411.6 328.0L412.6 328.4L414.4 328.9L416.8 329.4L420.0 329.9L423.7 330.4L428.1 330.8L433.2 331.3L438.8 331.8L444.9 332.2L451.5 332.7L458.6 333.2L466.1 333.7L474.0 334.1L482.2 334.6L490.7 335.1L499.4 335.6L508.2 336.1L517.2 336.5L526.2 337.0L535.2 337.5L544.2 337.9L553.0 338.4L561.7 338.9L570.2 339.4L578.4 339.9L586.3 340.3L593.8 340.8L600.9 341.3L607.5 341.8L613.6 342.2L619.2 342.7L624.3 343.2L628.7 343.6L632.4 344.1L635.6 344.6L638.0 345.1L639.8 345.6L640.8 346.0L641.2 346.5" fill="none" stroke="#111" stroke-width="1.1"/>
<path d="M411.2 335.5L411.6 336.0L412.6 336.4L414.4 336.9L416.8 337.4L420.0 337.9L423.7 338.4L428.1 338.8L433.2 339.3L438.8 339.8L444.9 340.2L451.5 340.7L458.6 341.2L466.1 341.7L474.0 342.1L482.2 342.6L490.7 343.1L499.4 343.6L508.2 344.1L517.2 344.5L526.2 345.0L535.2 345.5L544.2 345.9L553.0 346.4L561.7 346.9L570.2 347.4L578.4 347.9L586.3 348.3L593.8 348.8L600.9 349.3L607.5 349.8L613.6 350.2L619.2 350.7L624.3 351.2L628.7 351.6L632.4 352.1L635.6 352.6L638.0 353.1L639.8 353.6L640.8 354.0L641.2 354.5" fill="none" stroke="#111" stroke-width="1.1"/>
<path d="M389.0 104.7L393.6 103.5L398.1 102.7L402.7 102.0L407.3 101.5L411.9 101.1L416.4 100.7L421.0 100.4L425.6 100.0L430.1 99.7L434.7 99.4L439.3 99.1L443.8 98.8L448.4 98.6L453.0 98.4L457.6 98.3L462.1 98.2L466.7 98.1L471.3 98.0L475.8 97.9L480.4 97.7L485.0 97.5L489.5 97.2L494.1 96.9L498.7 96.6L503.2 96.3L507.8 96.0L512.4 95.7L517.0 95.3L521.5 95.0L526.1 94.7L530.7 94.5L535.2 94.2L539.8 93.9L544.4 93.6L549.0 93.3L553.5 93.1L558.1 92.8L562.7 92.5L567.2 92.3L571.8 92.1L576.4 91.8L580.9 91.6L585.5 91.4L590.1 91.2L594.7 91.0L599.2 90.8L603.8 90.6L608.4 90.4L612.9 90.3L617.5 90.1L622.1 89.9L626.6 89.8L631.2 89.7L635.8 89.6L640.4 89.5L644.9 89.4L649.5 89.3L654.1 89.4L658.6 89.5L663.2 89.6L663.2 89.8L658.6 90.8L654.1 91.8L649.5 92.6L644.9 93.1L640.4 93.5L635.8 94.0L631.2 94.3L626.6 94.7L622.1 95.0L617.5 95.2L612.9 95.5L608.4 95.7L603.8 95.9L599.2 96.1L594.7 96.3L590.1 96.4L585.5 96.6L580.9 96.8L576.4 97.0L571.8 97.3L567.2 97.5L562.7 97.8L558.1 98.1L553.5 98.4L549.0 98.8L544.4 99.1L539.8 99.4L535.2 99.8L530.7 100.1L526.1 100.3L521.5 100.6L517.0 100.8L512.4 101.0L507.8 101.2L503.2 101.4L498.7 101.6L494.1 101.8L489.5 102.0L485.0 102.2L480.4 102.4L475.8 102.7L471.3 102.9L466.7 103.2L462.1 103.5L457.6 103.8L453.0 104.0L448.4 104.3L443.8 104.6L439.3 104.9L434.7 105.2L430.1 105.5L425.6 105.8L421.0 106.0L416.4 106.3L411.9 106.4L407.3 106.5L402.7 106.4L398.1 106.1L393.6 105.6L389.0 104.7Z" fill="#f1efe9" stroke="#f1efe9" stroke-width="2.8" stroke-linejoin="round"/>
<path d="M389.0 104.7L393.6 103.5L398.1 102.7L402.7 102.0L407.3 101.5L411.9 101.1L416.4 100.7L421.0 100.4L425.6 100.0L430.1 99.7L434.7 99.4L439.3 99.1L443.8 98.8L448.4 98.6L453.0 98.4L457.6 98.3L462.1 98.2L466.7 98.1L471.3 98.0L475.8 97.9L480.4 97.7L485.0 97.5L489.5 97.2L494.1 96.9L498.7 96.6L503.2 96.3L507.8 96.0L512.4 95.7L517.0 95.3L521.5 95.0L526.1 94.7L530.7 94.5L535.2 94.2L539.8 93.9L544.4 93.6L549.0 93.3L553.5 93.1L558.1 92.8L562.7 92.5L567.2 92.3L571.8 92.1L576.4 91.8L580.9 91.6L585.5 91.4L590.1 91.2L594.7 91.0L599.2 90.8L603.8 90.6L608.4 90.4L612.9 90.3L617.5 90.1L622.1 89.9L626.6 89.8L631.2 89.7L635.8 89.6L640.4 89.5L644.9 89.4L649.5 89.3L654.1 89.4L658.6 89.5L663.2 89.6L663.2 89.8L658.6 90.8L654.1 91.8L649.5 92.6L644.9 93.1L640.4 93.5L635.8 94.0L631.2 94.3L626.6 94.7L622.1 95.0L617.5 95.2L612.9 95.5L608.4 95.7L603.8 95.9L599.2 96.1L594.7 96.3L590.1 96.4L585.5 96.6L580.9 96.8L576.4 97.0L571.8 97.3L567.2 97.5L562.7 97.8L558.1 98.1L553.5 98.4L549.0 98.8L544.4 99.1L539.8 99.4L535.2 99.8L530.7 100.1L526.1 100.3L521.5 100.6L517.0 100.8L512.4 101.0L507.8 101.2L503.2 101.4L498.7 101.6L494.1 101.8L489.5 102.0L485.0 102.2L480.4 102.4L475.8 102.7L471.3 102.9L466.7 103.2L462.1 103.5L457.6 103.8L453.0 104.0L448.4 104.3L443.8 104.6L439.3 104.9L434.7 105.2L430.1 105.5L425.6 105.8L421.0 106.0L416.4 106.3L411.9 106.4L407.3 106.5L402.7 106.4L398.1 106.1L393.6 105.6L389.0 104.7Z" fill="url(#gRH)"/>
<path d="M526.1 94.7L530.7 94.5L535.2 94.2L539.8 93.9L544.4 93.6L549.0 93.3L553.5 93.1L558.1 92.8L562.7 92.5L567.2 92.3L571.8 92.1L576.4 91.8" fill="none" stroke="#1f2a3d" stroke-width="0.7"/>
<path d="M457.6 103.8L462.1 103.5L466.7 103.2L471.3 102.9L475.8 102.7L480.4 102.4L485.0 102.2L489.5 102.0L494.1 101.8L498.7 101.6" fill="none" stroke="#2a3446" stroke-width="0.6"/>
<path d="M389.0 145.3L393.6 144.1L398.1 143.3L402.7 142.6L407.3 142.1L411.9 141.7L416.4 141.3L421.0 141.0L425.6 140.6L430.1 140.3L434.7 140.0L439.3 139.7L443.8 139.4L448.4 139.2L453.0 139.0L457.6 138.9L462.1 138.8L466.7 138.7L471.3 138.6L475.8 138.5L480.4 138.3L485.0 138.1L489.5 137.8L494.1 137.5L498.7 137.2L503.2 136.9L507.8 136.6L512.4 136.3L517.0 135.9L521.5 135.6L526.1 135.3L530.7 135.1L535.2 134.8L539.8 134.5L544.4 134.2L549.0 133.9L553.5 133.7L558.1 133.4L562.7 133.1L567.2 132.9L571.8 132.7L576.4 132.4L580.9 132.2L585.5 132.0L590.1 131.8L594.7 131.6L599.2 131.4L603.8 131.2L608.4 131.0L612.9 130.9L617.5 130.7L622.1 130.5L626.6 130.4L631.2 130.3L635.8 130.2L640.4 130.1L644.9 130.0L649.5 129.9L654.1 130.0L658.6 130.1L663.2 130.2L663.2 130.4L658.6 131.4L654.1 132.4L649.5 133.2L644.9 133.7L640.4 134.1L635.8 134.6L631.2 134.9L626.6 135.3L622.1 135.6L617.5 135.8L612.9 136.1L608.4 136.3L603.8 136.5L599.2 136.7L594.7 136.9L590.1 137.0L585.5 137.2L580.9 137.4L576.4 137.6L571.8 137.9L567.2 138.1L562.7 138.4L558.1 138.7L553.5 139.0L549.0 139.4L544.4 139.7L539.8 140.0L535.2 140.4L530.7 140.7L526.1 140.9L521.5 141.2L517.0 141.4L512.4 141.6L507.8 141.8L503.2 142.0L498.7 142.2L494.1 142.4L489.5 142.6L485.0 142.8L480.4 143.0L475.8 143.3L471.3 143.5L466.7 143.8L462.1 144.1L457.6 144.4L453.0 144.6L448.4 144.9L443.8 145.2L439.3 145.5L434.7 145.8L430.1 146.1L425.6 146.4L421.0 146.6L416.4 146.9L411.9 147.0L407.3 147.1L402.7 147.0L398.1 146.7L393.6 146.2L389.0 145.3Z" fill="#f1efe9" stroke="#f1efe9" stroke-width="2.8" stroke-linejoin="round"/>
<path d="M389.0 145.3L393.6 144.1L398.1 143.3L402.7 142.6L407.3 142.1L411.9 141.7L416.4 141.3L421.0 141.0L425.6 140.6L430.1 140.3L434.7 140.0L439.3 139.7L443.8 139.4L448.4 139.2L453.0 139.0L457.6 138.9L462.1 138.8L466.7 138.7L471.3 138.6L475.8 138.5L480.4 138.3L485.0 138.1L489.5 137.8L494.1 137.5L498.7 137.2L503.2 136.9L507.8 136.6L512.4 136.3L517.0 135.9L521.5 135.6L526.1 135.3L530.7 135.1L535.2 134.8L539.8 134.5L544.4 134.2L549.0 133.9L553.5 133.7L558.1 133.4L562.7 133.1L567.2 132.9L571.8 132.7L576.4 132.4L580.9 132.2L585.5 132.0L590.1 131.8L594.7 131.6L599.2 131.4L603.8 131.2L608.4 131.0L612.9 130.9L617.5 130.7L622.1 130.5L626.6 130.4L631.2 130.3L635.8 130.2L640.4 130.1L644.9 130.0L649.5 129.9L654.1 130.0L658.6 130.1L663.2 130.2L663.2 130.4L658.6 131.4L654.1 132.4L649.5 133.2L644.9 133.7L640.4 134.1L635.8 134.6L631.2 134.9L626.6 135.3L622.1 135.6L617.5 135.8L612.9 136.1L608.4 136.3L603.8 136.5L599.2 136.7L594.7 136.9L590.1 137.0L585.5 137.2L580.9 137.4L576.4 137.6L571.8 137.9L567.2 138.1L562.7 138.4L558.1 138.7L553.5 139.0L549.0 139.4L544.4 139.7L539.8 140.0L535.2 140.4L530.7 140.7L526.1 140.9L521.5 141.2L517.0 141.4L512.4 141.6L507.8 141.8L503.2 142.0L498.7 142.2L494.1 142.4L489.5 142.6L485.0 142.8L480.4 143.0L475.8 143.3L471.3 143.5L466.7 143.8L462.1 144.1L457.6 144.4L453.0 144.6L448.4 144.9L443.8 145.2L439.3 145.5L434.7 145.8L430.1 146.1L425.6 146.4L421.0 146.6L416.4 146.9L411.9 147.0L407.3 147.1L402.7 147.0L398.1 146.7L393.6 146.2L389.0 145.3Z" fill="url(#gRH)"/>
<path d="M526.1 135.3L530.7 135.1L535.2 134.8L539.8 134.5L544.4 134.2L549.0 133.9L553.5 133.7L558.1 133.4L562.7 133.1L567.2 132.9L571.8 132.7L576.4 132.4" fill="none" stroke="#1f2a3d" stroke-width="0.7"/>
<path d="M457.6 144.4L462.1 144.1L466.7 143.8L471.3 143.5L475.8 143.3L480.4 143.0L485.0 142.8L489.5 142.6L494.1 142.4L498.7 142.2" fill="none" stroke="#2a3446" stroke-width="0.6"/>
<path d="M389.0 185.9L393.6 184.7L398.1 183.9L402.7 183.2L407.3 182.7L411.9 182.3L416.4 181.9L421.0 181.6L425.6 181.2L430.1 180.9L434.7 180.6L439.3 180.3L443.8 180.0L448.4 179.8L453.0 179.6L457.6 179.5L462.1 179.4L466.7 179.3L471.3 179.2L475.8 179.1L480.4 178.9L485.0 178.7L489.5 178.4L494.1 178.1L498.7 177.8L503.2 177.5L507.8 177.2L512.4 176.9L517.0 176.5L521.5 176.2L526.1 175.9L530.7 175.7L535.2 175.4L539.8 175.1L544.4 174.8L549.0 174.5L553.5 174.3L558.1 174.0L562.7 173.7L567.2 173.5L571.8 173.3L576.4 173.0L580.9 172.8L585.5 172.6L590.1 172.4L594.7 172.2L599.2 172.0L603.8 171.8L608.4 171.6L612.9 171.5L617.5 171.3L622.1 171.1L626.6 171.0L631.2 170.9L635.8 170.8L640.4 170.7L644.9 170.6L649.5 170.5L654.1 170.6L658.6 170.7L663.2 170.8L663.2 171.0L658.6 172.0L654.1 173.0L649.5 173.8L644.9 174.3L640.4 174.7L635.8 175.2L631.2 175.5L626.6 175.9L622.1 176.2L617.5 176.4L612.9 176.7L608.4 176.9L603.8 177.1L599.2 177.3L594.7 177.5L590.1 177.6L585.5 177.8L580.9 178.0L576.4 178.2L571.8 178.5L567.2 178.7L562.7 179.0L558.1 179.3L553.5 179.6L549.0 180.0L544.4 180.3L539.8 180.6L535.2 181.0L530.7 181.3L526.1 181.5L521.5 181.8L517.0 182.0L512.4 182.2L507.8 182.4L503.2 182.6L498.7 182.8L494.1 183.0L489.5 183.2L485.0 183.4L480.4 183.6L475.8 183.9L471.3 184.1L466.7 184.4L462.1 184.7L457.6 185.0L453.0 185.2L448.4 185.5L443.8 185.8L439.3 186.1L434.7 186.4L430.1 186.7L425.6 187.0L421.0 187.2L416.4 187.5L411.9 187.6L407.3 187.7L402.7 187.6L398.1 187.3L393.6 186.8L389.0 185.9Z" fill="#f1efe9" stroke="#f1efe9" stroke-width="2.8" stroke-linejoin="round"/>
<path d="M389.0 185.9L393.6 184.7L398.1 183.9L402.7 183.2L407.3 182.7L411.9 182.3L416.4 181.9L421.0 181.6L425.6 181.2L430.1 180.9L434.7 180.6L439.3 180.3L443.8 180.0L448.4 179.8L453.0 179.6L457.6 179.5L462.1 179.4L466.7 179.3L471.3 179.2L475.8 179.1L480.4 178.9L485.0 178.7L489.5 178.4L494.1 178.1L498.7 177.8L503.2 177.5L507.8 177.2L512.4 176.9L517.0 176.5L521.5 176.2L526.1 175.9L530.7 175.7L535.2 175.4L539.8 175.1L544.4 174.8L549.0 174.5L553.5 174.3L558.1 174.0L562.7 173.7L567.2 173.5L571.8 173.3L576.4 173.0L580.9 172.8L585.5 172.6L590.1 172.4L594.7 172.2L599.2 172.0L603.8 171.8L608.4 171.6L612.9 171.5L617.5 171.3L622.1 171.1L626.6 171.0L631.2 170.9L635.8 170.8L640.4 170.7L644.9 170.6L649.5 170.5L654.1 170.6L658.6 170.7L663.2 170.8L663.2 171.0L658.6 172.0L654.1 173.0L649.5 173.8L644.9 174.3L640.4 174.7L635.8 175.2L631.2 175.5L626.6 175.9L622.1 176.2L617.5 176.4L612.9 176.7L608.4 176.9L603.8 177.1L599.2 177.3L594.7 177.5L590.1 177.6L585.5 177.8L580.9 178.0L576.4 178.2L571.8 178.5L567.2 178.7L562.7 179.0L558.1 179.3L553.5 179.6L549.0 180.0L544.4 180.3L539.8 180.6L535.2 181.0L530.7 181.3L526.1 181.5L521.5 181.8L517.0 182.0L512.4 182.2L507.8 182.4L503.2 182.6L498.7 182.8L494.1 183.0L489.5 183.2L485.0 183.4L480.4 183.6L475.8 183.9L471.3 184.1L466.7 184.4L462.1 184.7L457.6 185.0L453.0 185.2L448.4 185.5L443.8 185.8L439.3 186.1L434.7 186.4L430.1 186.7L425.6 187.0L421.0 187.2L416.4 187.5L411.9 187.6L407.3 187.7L402.7 187.6L398.1 187.3L393.6 186.8L389.0 185.9Z" fill="url(#gRH)"/>
<path d="M526.1 175.9L530.7 175.7L535.2 175.4L539.8 175.1L544.4 174.8L549.0 174.5L553.5 174.3L558.1 174.0L562.7 173.7L567.2 173.5L571.8 173.3L576.4 173.0" fill="none" stroke="#1f2a3d" stroke-width="0.7"/>
<path d="M457.6 185.0L462.1 184.7L466.7 184.4L471.3 184.1L475.8 183.9L480.4 183.6L485.0 183.4L489.5 183.2L494.1 183.0L498.7 182.8" fill="none" stroke="#2a3446" stroke-width="0.6"/>
<path d="M389.0 226.5L393.6 225.3L398.1 224.5L402.7 223.8L407.3 223.3L411.9 222.9L416.4 222.5L421.0 222.2L425.6 221.8L430.1 221.5L434.7 221.2L439.3 220.9L443.8 220.6L448.4 220.4L453.0 220.2L457.6 220.1L462.1 220.0L466.7 219.9L471.3 219.8L475.8 219.7L480.4 219.5L485.0 219.3L489.5 219.0L494.1 218.7L498.7 218.4L503.2 218.1L507.8 217.8L512.4 217.5L517.0 217.1L521.5 216.8L526.1 216.5L530.7 216.3L535.2 216.0L539.8 215.7L544.4 215.4L549.0 215.1L553.5 214.9L558.1 214.6L562.7 214.3L567.2 214.1L571.8 213.9L576.4 213.6L580.9 213.4L585.5 213.2L590.1 213.0L594.7 212.8L599.2 212.6L603.8 212.4L608.4 212.2L612.9 212.1L617.5 211.9L622.1 211.7L626.6 211.6L631.2 211.5L635.8 211.4L640.4 211.3L644.9 211.2L649.5 211.1L654.1 211.2L658.6 211.3L663.2 211.4L663.2 211.6L658.6 212.6L654.1 213.6L649.5 214.4L644.9 214.9L640.4 215.3L635.8 215.8L631.2 216.1L626.6 216.5L622.1 216.8L617.5 217.0L612.9 217.3L608.4 217.5L603.8 217.7L599.2 217.9L594.7 218.1L590.1 218.2L585.5 218.4L580.9 218.6L576.4 218.8L571.8 219.1L567.2 219.3L562.7 219.6L558.1 219.9L553.5 220.2L549.0 220.6L544.4 220.9L539.8 221.2L535.2 221.6L530.7 221.9L526.1 222.1L521.5 222.4L517.0 222.6L512.4 222.8L507.8 223.0L503.2 223.2L498.7 223.4L494.1 223.6L489.5 223.8L485.0 224.0L480.4 224.2L475.8 224.5L471.3 224.7L466.7 225.0L462.1 225.3L457.6 225.6L453.0 225.8L448.4 226.1L443.8 226.4L439.3 226.7L434.7 227.0L430.1 227.3L425.6 227.6L421.0 227.8L416.4 228.1L411.9 228.2L407.3 228.3L402.7 228.2L398.1 227.9L393.6 227.4L389.0 226.5Z" fill="#f1efe9" stroke="#f1efe9" stroke-width="2.8" stroke-linejoin="round"/>
<path d="M389.0 226.5L393.6 225.3L398.1 224.5L402.7 223.8L407.3 223.3L411.9 222.9L416.4 222.5L421.0 222.2L425.6 221.8L430.1 221.5L434.7 221.2L439.3 220.9L443.8 220.6L448.4 220.4L453.0 220.2L457.6 220.1L462.1 220.0L466.7 219.9L471.3 219.8L475.8 219.7L480.4 219.5L485.0 219.3L489.5 219.0L494.1 218.7L498.7 218.4L503.2 218.1L507.8 217.8L512.4 217.5L517.0 217.1L521.5 216.8L526.1 216.5L530.7 216.3L535.2 216.0L539.8 215.7L544.4 215.4L549.0 215.1L553.5 214.9L558.1 214.6L562.7 214.3L567.2 214.1L571.8 213.9L576.4 213.6L580.9 213.4L585.5 213.2L590.1 213.0L594.7 212.8L599.2 212.6L603.8 212.4L608.4 212.2L612.9 212.1L617.5 211.9L622.1 211.7L626.6 211.6L631.2 211.5L635.8 211.4L640.4 211.3L644.9 211.2L649.5 211.1L654.1 211.2L658.6 211.3L663.2 211.4L663.2 211.6L658.6 212.6L654.1 213.6L649.5 214.4L644.9 214.9L640.4 215.3L635.8 215.8L631.2 216.1L626.6 216.5L622.1 216.8L617.5 217.0L612.9 217.3L608.4 217.5L603.8 217.7L599.2 217.9L594.7 218.1L590.1 218.2L585.5 218.4L580.9 218.6L576.4 218.8L571.8 219.1L567.2 219.3L562.7 219.6L558.1 219.9L553.5 220.2L549.0 220.6L544.4 220.9L539.8 221.2L535.2 221.6L530.7 221.9L526.1 222.1L521.5 222.4L517.0 222.6L512.4 222.8L507.8 223.0L503.2 223.2L498.7 223.4L494.1 223.6L489.5 223.8L485.0 224.0L480.4 224.2L475.8 224.5L471.3 224.7L466.7 225.0L462.1 225.3L457.6 225.6L453.0 225.8L448.4 226.1L443.8 226.4L439.3 226.7L434.7 227.0L430.1 227.3L425.6 227.6L421.0 227.8L416.4 228.1L411.9 228.2L407.3 228.3L402.7 228.2L398.1 227.9L393.6 227.4L389.0 226.5Z" fill="url(#gRH)"/>
<path d="M526.1 216.5L530.7 216.3L535.2 216.0L539.8 215.7L544.4 215.4L549.0 215.1L553.5 214.9L558.1 214.6L562.7 214.3L567.2 214.1L571.8 213.9L576.4 213.6" fill="none" stroke="#1f2a3d" stroke-width="0.7"/>
<path d="M457.6 225.6L462.1 225.3L466.7 225.0L471.3 224.7L475.8 224.5L480.4 224.2L485.0 224.0L489.5 223.8L494.1 223.6L498.7 223.4" fill="none" stroke="#2a3446" stroke-width="0.6"/>
<path d="M389.0 267.1L393.6 265.9L398.1 265.1L402.7 264.4L407.3 263.9L411.9 263.5L416.4 263.1L421.0 262.8L425.6 262.4L430.1 262.1L434.7 261.8L439.3 261.5L443.8 261.2L448.4 261.0L453.0 260.8L457.6 260.7L462.1 260.6L466.7 260.5L471.3 260.4L475.8 260.3L480.4 260.1L485.0 259.9L489.5 259.6L494.1 259.3L498.7 259.0L503.2 258.7L507.8 258.4L512.4 258.1L517.0 257.7L521.5 257.4L526.1 257.1L530.7 256.9L535.2 256.6L539.8 256.3L544.4 256.0L549.0 255.7L553.5 255.5L558.1 255.2L562.7 254.9L567.2 254.7L571.8 254.5L576.4 254.2L580.9 254.0L585.5 253.8L590.1 253.6L594.7 253.4L599.2 253.2L603.8 253.0L608.4 252.8L612.9 252.7L617.5 252.5L622.1 252.3L626.6 252.2L631.2 252.1L635.8 252.0L640.4 251.9L644.9 251.8L649.5 251.7L654.1 251.8L658.6 251.9L663.2 252.0L663.2 252.2L658.6 253.2L654.1 254.2L649.5 255.0L644.9 255.5L640.4 255.9L635.8 256.4L631.2 256.7L626.6 257.1L622.1 257.4L617.5 257.6L612.9 257.9L608.4 258.1L603.8 258.3L599.2 258.5L594.7 258.7L590.1 258.8L585.5 259.0L580.9 259.2L576.4 259.4L571.8 259.7L567.2 259.9L562.7 260.2L558.1 260.5L553.5 260.8L549.0 261.2L544.4 261.5L539.8 261.8L535.2 262.2L530.7 262.5L526.1 262.7L521.5 263.0L517.0 263.2L512.4 263.4L507.8 263.6L503.2 263.8L498.7 264.0L494.1 264.2L489.5 264.4L485.0 264.6L480.4 264.8L475.8 265.1L471.3 265.3L466.7 265.6L462.1 265.9L457.6 266.2L453.0 266.4L448.4 266.7L443.8 267.0L439.3 267.3L434.7 267.6L430.1 267.9L425.6 268.2L421.0 268.4L416.4 268.7L411.9 268.8L407.3 268.9L402.7 268.8L398.1 268.5L393.6 268.0L389.0 267.1Z" fill="#f1efe9" stroke="#f1efe9" stroke-width="2.8" stroke-linejoin="round"/>
<path d="M389.0 267.1L393.6 265.9L398.1 265.1L402.7 264.4L407.3 263.9L411.9 263.5L416.4 263.1L421.0 262.8L425.6 262.4L430.1 262.1L434.7 261.8L439.3 261.5L443.8 261.2L448.4 261.0L453.0 260.8L457.6 260.7L462.1 260.6L466.7 260.5L471.3 260.4L475.8 260.3L480.4 260.1L485.0 259.9L489.5 259.6L494.1 259.3L498.7 259.0L503.2 258.7L507.8 258.4L512.4 258.1L517.0 257.7L521.5 257.4L526.1 257.1L530.7 256.9L535.2 256.6L539.8 256.3L544.4 256.0L549.0 255.7L553.5 255.5L558.1 255.2L562.7 254.9L567.2 254.7L571.8 254.5L576.4 254.2L580.9 254.0L585.5 253.8L590.1 253.6L594.7 253.4L599.2 253.2L603.8 253.0L608.4 252.8L612.9 252.7L617.5 252.5L622.1 252.3L626.6 252.2L631.2 252.1L635.8 252.0L640.4 251.9L644.9 251.8L649.5 251.7L654.1 251.8L658.6 251.9L663.2 252.0L663.2 252.2L658.6 253.2L654.1 254.2L649.5 255.0L644.9 255.5L640.4 255.9L635.8 256.4L631.2 256.7L626.6 257.1L622.1 257.4L617.5 257.6L612.9 257.9L608.4 258.1L603.8 258.3L599.2 258.5L594.7 258.7L590.1 258.8L585.5 259.0L580.9 259.2L576.4 259.4L571.8 259.7L567.2 259.9L562.7 260.2L558.1 260.5L553.5 260.8L549.0 261.2L544.4 261.5L539.8 261.8L535.2 262.2L530.7 262.5L526.1 262.7L521.5 263.0L517.0 263.2L512.4 263.4L507.8 263.6L503.2 263.8L498.7 264.0L494.1 264.2L489.5 264.4L485.0 264.6L480.4 264.8L475.8 265.1L471.3 265.3L466.7 265.6L462.1 265.9L457.6 266.2L453.0 266.4L448.4 266.7L443.8 267.0L439.3 267.3L434.7 267.6L430.1 267.9L425.6 268.2L421.0 268.4L416.4 268.7L411.9 268.8L407.3 268.9L402.7 268.8L398.1 268.5L393.6 268.0L389.0 267.1Z" fill="url(#gRH)"/>
<path d="M526.1 257.1L530.7 256.9L535.2 256.6L539.8 256.3L544.4 256.0L549.0 255.7L553.5 255.5L558.1 255.2L562.7 254.9L567.2 254.7L571.8 254.5L576.4 254.2" fill="none" stroke="#1f2a3d" stroke-width="0.7"/>
<path d="M457.6 266.2L462.1 265.9L466.7 265.6L471.3 265.3L475.8 265.1L480.4 264.8L485.0 264.6L489.5 264.4L494.1 264.2L498.7 264.0" fill="none" stroke="#2a3446" stroke-width="0.6"/>
<path d="M389.0 307.7L393.6 306.5L398.1 305.7L402.7 305.0L407.3 304.5L411.9 304.1L416.4 303.7L421.0 303.4L425.6 303.0L430.1 302.7L434.7 302.4L439.3 302.1L443.8 301.8L448.4 301.6L453.0 301.4L457.6 301.3L462.1 301.2L466.7 301.1L471.3 301.0L475.8 300.9L480.4 300.7L485.0 300.5L489.5 300.2L494.1 299.9L498.7 299.6L503.2 299.3L507.8 299.0L512.4 298.7L517.0 298.3L521.5 298.0L526.1 297.7L530.7 297.5L535.2 297.2L539.8 296.9L544.4 296.6L549.0 296.3L553.5 296.1L558.1 295.8L562.7 295.5L567.2 295.3L571.8 295.1L576.4 294.8L580.9 294.6L585.5 294.4L590.1 294.2L594.7 294.0L599.2 293.8L603.8 293.6L608.4 293.4L612.9 293.3L617.5 293.1L622.1 292.9L626.6 292.8L631.2 292.7L635.8 292.6L640.4 292.5L644.9 292.4L649.5 292.3L654.1 292.4L658.6 292.5L663.2 292.6L663.2 292.8L658.6 293.8L654.1 294.8L649.5 295.6L644.9 296.1L640.4 296.5L635.8 297.0L631.2 297.3L626.6 297.7L622.1 298.0L617.5 298.2L612.9 298.5L608.4 298.7L603.8 298.9L599.2 299.1L594.7 299.3L590.1 299.4L585.5 299.6L580.9 299.8L576.4 300.0L571.8 300.3L567.2 300.5L562.7 300.8L558.1 301.1L553.5 301.4L549.0 301.8L544.4 302.1L539.8 302.4L535.2 302.8L530.7 303.1L526.1 303.3L521.5 303.6L517.0 303.8L512.4 304.0L507.8 304.2L503.2 304.4L498.7 304.6L494.1 304.8L489.5 305.0L485.0 305.2L480.4 305.4L475.8 305.7L471.3 305.9L466.7 306.2L462.1 306.5L457.6 306.8L453.0 307.0L448.4 307.3L443.8 307.6L439.3 307.9L434.7 308.2L430.1 308.5L425.6 308.8L421.0 309.0L416.4 309.3L411.9 309.4L407.3 309.5L402.7 309.4L398.1 309.1L393.6 308.6L389.0 307.7Z" fill="#f1efe9" stroke="#f1efe9" stroke-width="2.8" stroke-linejoin="round"/>
<path d="M389.0 307.7L393.6 306.5L398.1 305.7L402.7 305.0L407.3 304.5L411.9 304.1L416.4 303.7L421.0 303.4L425.6 303.0L430.1 302.7L434.7 302.4L439.3 302.1L443.8 301.8L448.4 301.6L453.0 301.4L457.6 301.3L462.1 301.2L466.7 301.1L471.3 301.0L475.8 300.9L480.4 300.7L485.0 300.5L489.5 300.2L494.1 299.9L498.7 299.6L503.2 299.3L507.8 299.0L512.4 298.7L517.0 298.3L521.5 298.0L526.1 297.7L530.7 297.5L535.2 297.2L539.8 296.9L544.4 296.6L549.0 296.3L553.5 296.1L558.1 295.8L562.7 295.5L567.2 295.3L571.8 295.1L576.4 294.8L580.9 294.6L585.5 294.4L590.1 294.2L594.7 294.0L599.2 293.8L603.8 293.6L608.4 293.4L612.9 293.3L617.5 293.1L622.1 292.9L626.6 292.8L631.2 292.7L635.8 292.6L640.4 292.5L644.9 292.4L649.5 292.3L654.1 292.4L658.6 292.5L663.2 292.6L663.2 292.8L658.6 293.8L654.1 294.8L649.5 295.6L644.9 296.1L640.4 296.5L635.8 297.0L631.2 297.3L626.6 297.7L622.1 298.0L617.5 298.2L612.9 298.5L608.4 298.7L603.8 298.9L599.2 299.1L594.7 299.3L590.1 299.4L585.5 299.6L580.9 299.8L576.4 300.0L571.8 300.3L567.2 300.5L562.7 300.8L558.1 301.1L553.5 301.4L549.0 301.8L544.4 302.1L539.8 302.4L535.2 302.8L530.7 303.1L526.1 303.3L521.5 303.6L517.0 303.8L512.4 304.0L507.8 304.2L503.2 304.4L498.7 304.6L494.1 304.8L489.5 305.0L485.0 305.2L480.4 305.4L475.8 305.7L471.3 305.9L466.7 306.2L462.1 306.5L457.6 306.8L453.0 307.0L448.4 307.3L443.8 307.6L439.3 307.9L434.7 308.2L430.1 308.5L425.6 308.8L421.0 309.0L416.4 309.3L411.9 309.4L407.3 309.5L402.7 309.4L398.1 309.1L393.6 308.6L389.0 307.7Z" fill="url(#gRH)"/>
<path d="M526.1 297.7L530.7 297.5L535.2 297.2L539.8 296.9L544.4 296.6L549.0 296.3L553.5 296.1L558.1 295.8L562.7 295.5L567.2 295.3L571.8 295.1L576.4 294.8" fill="none" stroke="#1f2a3d" stroke-width="0.7"/>
<path d="M457.6 306.8L462.1 306.5L466.7 306.2L471.3 305.9L475.8 305.7L480.4 305.4L485.0 305.2L489.5 305.0L494.1 304.8L498.7 304.6" fill="none" stroke="#2a3446" stroke-width="0.6"/>
<path d="M389.0 348.3L393.6 347.1L398.1 346.3L402.7 345.6L407.3 345.1L411.9 344.7L416.4 344.3L421.0 344.0L425.6 343.6L430.1 343.3L434.7 343.0L439.3 342.7L443.8 342.4L448.4 342.2L453.0 342.0L457.6 341.9L462.1 341.8L466.7 341.7L471.3 341.6L475.8 341.5L480.4 341.3L485.0 341.1L489.5 340.8L494.1 340.5L498.7 340.2L503.2 339.9L507.8 339.6L512.4 339.3L517.0 338.9L521.5 338.6L526.1 338.3L530.7 338.1L535.2 337.8L539.8 337.5L544.4 337.2L549.0 336.9L553.5 336.7L558.1 336.4L562.7 336.1L567.2 335.9L571.8 335.7L576.4 335.4L580.9 335.2L585.5 335.0L590.1 334.8L594.7 334.6L599.2 334.4L603.8 334.2L608.4 334.0L612.9 333.9L617.5 333.7L622.1 333.5L626.6 333.4L631.2 333.3L635.8 333.2L640.4 333.1L644.9 333.0L649.5 332.9L654.1 333.0L658.6 333.1L663.2 333.2L663.2 333.4L658.6 334.4L654.1 335.4L649.5 336.2L644.9 336.7L640.4 337.1L635.8 337.6L631.2 337.9L626.6 338.3L622.1 338.6L617.5 338.8L612.9 339.1L608.4 339.3L603.8 339.5L599.2 339.7L594.7 339.9L590.1 340.0L585.5 340.2L580.9 340.4L576.4 340.6L571.8 340.9L567.2 341.1L562.7 341.4L558.1 341.7L553.5 342.0L549.0 342.4L544.4 342.7L539.8 343.0L535.2 343.4L530.7 343.7L526.1 343.9L521.5 344.2L517.0 344.4L512.4 344.6L507.8 344.8L503.2 345.0L498.7 345.2L494.1 345.4L489.5 345.6L485.0 345.8L480.4 346.0L475.8 346.3L471.3 346.5L466.7 346.8L462.1 347.1L457.6 347.4L453.0 347.6L448.4 347.9L443.8 348.2L439.3 348.5L434.7 348.8L430.1 349.1L425.6 349.4L421.0 349.6L416.4 349.9L411.9 350.0L407.3 350.1L402.7 350.0L398.1 349.7L393.6 349.2L389.0 348.3Z" fill="#f1efe9" stroke="#f1efe9" stroke-width="2.8" stroke-linejoin="round"/>
<path d="M389.0 348.3L393.6 347.1L398.1 346.3L402.7 345.6L407.3 345.1L411.9 344.7L416.4 344.3L421.0 344.0L425.6 343.6L430.1 343.3L434.7 343.0L439.3 342.7L443.8 342.4L448.4 342.2L453.0 342.0L457.6 341.9L462.1 341.8L466.7 341.7L471.3 341.6L475.8 341.5L480.4 341.3L485.0 341.1L489.5 340.8L494.1 340.5L498.7 340.2L503.2 339.9L507.8 339.6L512.4 339.3L517.0 338.9L521.5 338.6L526.1 338.3L530.7 338.1L535.2 337.8L539.8 337.5L544.4 337.2L549.0 336.9L553.5 336.7L558.1 336.4L562.7 336.1L567.2 335.9L571.8 335.7L576.4 335.4L580.9 335.2L585.5 335.0L590.1 334.8L594.7 334.6L599.2 334.4L603.8 334.2L608.4 334.0L612.9 333.9L617.5 333.7L622.1 333.5L626.6 333.4L631.2 333.3L635.8 333.2L640.4 333.1L644.9 333.0L649.5 332.9L654.1 333.0L658.6 333.1L663.2 333.2L663.2 333.4L658.6 334.4L654.1 335.4L649.5 336.2L644.9 336.7L640.4 337.1L635.8 337.6L631.2 337.9L626.6 338.3L622.1 338.6L617.5 338.8L612.9 339.1L608.4 339.3L603.8 339.5L599.2 339.7L594.7 339.9L590.1 340.0L585.5 340.2L580.9 340.4L576.4 340.6L571.8 340.9L567.2 341.1L562.7 341.4L558.1 341.7L553.5 342.0L549.0 342.4L544.4 342.7L539.8 343.0L535.2 343.4L530.7 343.7L526.1 343.9L521.5 344.2L517.0 344.4L512.4 344.6L507.8 344.8L503.2 345.0L498.7 345.2L494.1 345.4L489.5 345.6L485.0 345.8L480.4 346.0L475.8 346.3L471.3 346.5L466.7 346.8L462.1 347.1L457.6 347.4L453.0 347.6L448.4 347.9L443.8 348.2L439.3 348.5L434.7 348.8L430.1 349.1L425.6 349.4L421.0 349.6L416.4 349.9L411.9 350.0L407.3 350.1L402.7 350.0L398.1 349.7L393.6 349.2L389.0 348.3Z" fill="url(#gRH)"/>
<path d="M526.1 338.3L530.7 338.1L535.2 337.8L539.8 337.5L544.4 337.2L549.0 336.9L553.5 336.7L558.1 336.4L562.7 336.1L567.2 335.9L571.8 335.7L576.4 335.4" fill="none" stroke="#1f2a3d" stroke-width="0.7"/>
<path d="M457.6 347.4L462.1 347.1L466.7 346.8L471.3 346.5L475.8 346.3L480.4 346.0L485.0 345.8L489.5 345.6L494.1 345.4L498.7 345.2" fill="none" stroke="#2a3446" stroke-width="0.6"/>
<path d="M389.0 388.9L393.6 387.7L398.1 386.9L402.7 386.2L407.3 385.7L411.9 385.3L416.4 384.9L421.0 384.6L425.6 384.2L430.1 383.9L434.7 383.6L439.3 383.3L443.8 383.0L448.4 382.8L453.0 382.6L457.6 382.5L462.1 382.4L466.7 382.3L471.3 382.2L475.8 382.1L480.4 381.9L485.0 381.7L489.5 381.4L494.1 381.1L498.7 380.8L503.2 380.5L507.8 380.2L512.4 379.9L517.0 379.5L521.5 379.2L526.1 378.9L530.7 378.7L535.2 378.4L539.8 378.1L544.4 377.8L549.0 377.5L553.5 377.3L558.1 377.0L562.7 376.7L567.2 376.5L571.8 376.3L576.4 376.0L580.9 375.8L585.5 375.6L590.1 375.4L594.7 375.2L599.2 375.0L603.8 374.8L608.4 374.6L612.9 374.5L617.5 374.3L622.1 374.1L626.6 374.0L631.2 373.9L635.8 373.8L640.4 373.7L644.9 373.6L649.5 373.5L654.1 373.6L658.6 373.7L663.2 373.8L663.2 374.0L658.6 375.0L654.1 376.0L649.5 376.8L644.9 377.3L640.4 377.7L635.8 378.2L631.2 378.5L626.6 378.9L622.1 379.2L617.5 379.4L612.9 379.7L608.4 379.9L603.8 380.1L599.2 380.3L594.7 380.5L590.1 380.6L585.5 380.8L580.9 381.0L576.4 381.2L571.8 381.5L567.2 381.7L562.7 382.0L558.1 382.3L553.5 382.6L549.0 383.0L544.4 383.3L539.8 383.6L535.2 384.0L530.7 384.3L526.1 384.5L521.5 384.8L517.0 385.0L512.4 385.2L507.8 385.4L503.2 385.6L498.7 385.8L494.1 386.0L489.5 386.2L485.0 386.4L480.4 386.6L475.8 386.9L471.3 387.1L466.7 387.4L462.1 387.7L457.6 388.0L453.0 388.2L448.4 388.5L443.8 388.8L439.3 389.1L434.7 389.4L430.1 389.7L425.6 390.0L421.0 390.2L416.4 390.5L411.9 390.6L407.3 390.7L402.7 390.6L398.1 390.3L393.6 389.8L389.0 388.9Z" fill="#f1efe9" stroke="#f1efe9" stroke-width="2.8" stroke-linejoin="round"/>
<path d="M389.0 388.9L393.6 387.7L398.1 386.9L402.7 386.2L407.3 385.7L411.9 385.3L416.4 384.9L421.0 384.6L425.6 384.2L430.1 383.9L434.7 383.6L439.3 383.3L443.8 383.0L448.4 382.8L453.0 382.6L457.6 382.5L462.1 382.4L466.7 382.3L471.3 382.2L475.8 382.1L480.4 381.9L485.0 381.7L489.5 381.4L494.1 381.1L498.7 380.8L503.2 380.5L507.8 380.2L512.4 379.9L517.0 379.5L521.5 379.2L526.1 378.9L530.7 378.7L535.2 378.4L539.8 378.1L544.4 377.8L549.0 377.5L553.5 377.3L558.1 377.0L562.7 376.7L567.2 376.5L571.8 376.3L576.4 376.0L580.9 375.8L585.5 375.6L590.1 375.4L594.7 375.2L599.2 375.0L603.8 374.8L608.4 374.6L612.9 374.5L617.5 374.3L622.1 374.1L626.6 374.0L631.2 373.9L635.8 373.8L640.4 373.7L644.9 373.6L649.5 373.5L654.1 373.6L658.6 373.7L663.2 373.8L663.2 374.0L658.6 375.0L654.1 376.0L649.5 376.8L644.9 377.3L640.4 377.7L635.8 378.2L631.2 378.5L626.6 378.9L622.1 379.2L617.5 379.4L612.9 379.7L608.4 379.9L603.8 380.1L599.2 380.3L594.7 380.5L590.1 380.6L585.5 380.8L580.9 381.0L576.4 381.2L571.8 381.5L567.2 381.7L562.7 382.0L558.1 382.3L553.5 382.6L549.0 383.0L544.4 383.3L539.8 383.6L535.2 384.0L530.7 384.3L526.1 384.5L521.5 384.8L517.0 385.0L512.4 385.2L507.8 385.4L503.2 385.6L498.7 385.8L494.1 386.0L489.5 386.2L485.0 386.4L480.4 386.6L475.8 386.9L471.3 387.1L466.7 387.4L462.1 387.7L457.6 388.0L453.0 388.2L448.4 388.5L443.8 388.8L439.3 389.1L434.7 389.4L430.1 389.7L425.6 390.0L421.0 390.2L416.4 390.5L411.9 390.6L407.3 390.7L402.7 390.6L398.1 390.3L393.6 389.8L389.0 388.9Z" fill="url(#gRH)"/>
<path d="M526.1 378.9L530.7 378.7L535.2 378.4L539.8 378.1L544.4 377.8L549.0 377.5L553.5 377.3L558.1 377.0L562.7 376.7L567.2 376.5L571.8 376.3L576.4 376.0" fill="none" stroke="#1f2a3d" stroke-width="0.7"/>
<path d="M457.6 388.0L462.1 387.7L466.7 387.4L471.3 387.1L475.8 386.9L480.4 386.6L485.0 386.4L489.5 386.2L494.1 386.0L498.7 385.8" fill="none" stroke="#2a3446" stroke-width="0.6"/>
<path d="M389.1 105.8L389.4 106.1L390.2 106.5L391.5 106.9L393.4 107.3L395.8 107.7L398.7 108.1L402.1 108.5L406.1 108.9L410.4 109.3L415.3 109.7L420.6 110.1L426.3 110.5L432.3 110.8L438.8 111.2L445.6 111.6L452.7 112.0L460.2 112.4L467.8 112.8L475.7 113.1L483.8 113.5L492.1 113.9L500.5 114.2L509.0 114.6L517.6 115.0L526.2 115.4L534.8 115.7L543.4 116.1L551.9 116.5L560.3 116.8L568.6 117.2L576.7 117.5L584.6 117.9L592.2 118.2L599.7 118.6L606.8 118.9L613.6 119.2L620.1 119.5L626.1 119.9L631.8 120.1L637.1 120.4L642.0 120.7L646.3 121.0L650.3 121.3L653.7 121.6L656.6 121.9L659.0 122.2L660.9 122.5L662.2 122.8L663.0 123.2L663.3 123.6L663.3 130.7L663.0 130.3L662.2 129.9L660.9 129.5L659.0 129.1L656.6 128.6L653.7 128.2L650.3 127.7L646.3 127.3L642.0 126.8L637.1 126.4L631.8 126.0L626.1 125.5L620.1 125.1L613.6 124.7L606.8 124.2L599.7 123.8L592.2 123.4L584.6 123.1L576.7 122.7L568.6 122.3L560.3 121.9L551.9 121.6L543.4 121.2L534.8 120.8L526.2 120.5L517.6 120.1L509.0 119.7L500.5 119.3L492.1 119.0L483.8 118.6L475.7 118.2L467.8 117.9L460.2 117.5L452.7 117.2L445.6 116.8L438.8 116.5L432.3 116.1L426.3 115.8L420.6 115.4L415.3 115.1L410.4 114.8L406.1 114.4L402.1 114.1L398.7 113.8L395.8 113.4L393.4 113.1L391.5 112.7L390.2 112.4L389.4 112.0L389.1 111.7Z" fill="#f3f1ec" stroke="#f3f1ec" stroke-width="3.0" stroke-linejoin="round"/>
<path d="M389.1 105.8L389.4 106.1L390.2 106.5L391.5 106.9L393.4 107.3L395.8 107.7L398.7 108.1L402.1 108.5L406.1 108.9L410.4 109.3L415.3 109.7L420.6 110.1L426.3 110.5L432.3 110.8L438.8 111.2L445.6 111.6L452.7 112.0L460.2 112.4L467.8 112.8L475.7 113.1L483.8 113.5L492.1 113.9L500.5 114.2L509.0 114.6L517.6 115.0L526.2 115.4L534.8 115.7L543.4 116.1L551.9 116.5L560.3 116.8L568.6 117.2L576.7 117.5L584.6 117.9L592.2 118.2L599.7 118.6L606.8 118.9L613.6 119.2L620.1 119.5L626.1 119.9L631.8 120.1L637.1 120.4L642.0 120.7L646.3 121.0L650.3 121.3L653.7 121.6L656.6 121.9L659.0 122.2L660.9 122.5L662.2 122.8L663.0 123.2L663.3 123.6L663.3 130.7L663.0 130.3L662.2 129.9L660.9 129.5L659.0 129.1L656.6 128.6L653.7 128.2L650.3 127.7L646.3 127.3L642.0 126.8L637.1 126.4L631.8 126.0L626.1 125.5L620.1 125.1L613.6 124.7L606.8 124.2L599.7 123.8L592.2 123.4L584.6 123.1L576.7 122.7L568.6 122.3L560.3 121.9L551.9 121.6L543.4 121.2L534.8 120.8L526.2 120.5L517.6 120.1L509.0 119.7L500.5 119.3L492.1 119.0L483.8 118.6L475.7 118.2L467.8 117.9L460.2 117.5L452.7 117.2L445.6 116.8L438.8 116.5L432.3 116.1L426.3 115.8L420.6 115.4L415.3 115.1L410.4 114.8L406.1 114.4L402.1 114.1L398.7 113.8L395.8 113.4L393.4 113.1L391.5 112.7L390.2 112.4L389.4 112.0L389.1 111.7Z" fill="url(#gBlue)"/>
<path d="M389.1 105.8L389.4 106.1L390.2 106.5L391.5 106.9L393.4 107.3L395.8 107.7L398.7 108.1L402.1 108.5L406.1 108.9L410.4 109.3L415.3 109.7L420.6 110.1L426.3 110.5L432.3 110.8L438.8 111.2L445.6 111.6L452.7 112.0L460.2 112.4L467.8 112.8L475.7 113.1L483.8 113.5L492.1 113.9L500.5 114.2L509.0 114.6L517.6 115.0L526.2 115.4L534.8 115.7L543.4 116.1L551.9 116.5L560.3 116.8L568.6 117.2L576.7 117.5L584.6 117.9L592.2 118.2L599.7 118.6L606.8 118.9L613.6 119.2L620.1 119.5L626.1 119.9L631.8 120.1L637.1 120.4L642.0 120.7L646.3 121.0L650.3 121.3L653.7 121.6L656.6 121.9L659.0 122.2L660.9 122.5L662.2 122.8L663.0 123.2L663.3 123.6" fill="none" stroke="#3f6cc4" stroke-width="0.8"/>
<path d="M389.1 111.7L389.4 112.0L390.2 112.4L391.5 112.7L393.4 113.1L395.8 113.4L398.7 113.8L402.1 114.1L406.1 114.4L410.4 114.8L415.3 115.1L420.6 115.4L426.3 115.8L432.3 116.1L438.8 116.5L445.6 116.8L452.7 117.2L460.2 117.5L467.8 117.9L475.7 118.2L483.8 118.6L492.1 119.0L500.5 119.3L509.0 119.7L517.6 120.1L526.2 120.5L534.8 120.8L543.4 121.2L551.9 121.6L560.3 121.9L568.6 122.3L576.7 122.7L584.6 123.1L592.2 123.4L599.7 123.8L606.8 124.2L613.6 124.7L620.1 125.1L626.1 125.5L631.8 126.0L637.1 126.4L642.0 126.8L646.3 127.3L650.3 127.7L653.7 128.2L656.6 128.6L659.0 129.1L660.9 129.5L662.2 129.9L663.0 130.3L663.3 130.7" fill="none" stroke="#5580d2" stroke-width="0.7"/>
<path d="M389.1 146.4L389.4 146.7L390.2 147.1L391.5 147.5L393.4 147.9L395.8 148.3L398.7 148.7L402.1 149.1L406.1 149.5L410.4 149.9L415.3 150.3L420.6 150.7L426.3 151.1L432.3 151.4L438.8 151.8L445.6 152.2L452.7 152.6L460.2 153.0L467.8 153.4L475.7 153.7L483.8 154.1L492.1 154.5L500.5 154.8L509.0 155.2L517.6 155.6L526.2 155.9L534.8 156.3L543.4 156.7L551.9 157.1L560.3 157.4L568.6 157.8L576.7 158.1L584.6 158.5L592.2 158.8L599.7 159.2L606.8 159.5L613.6 159.8L620.1 160.1L626.1 160.5L631.8 160.7L637.1 161.0L642.0 161.3L646.3 161.6L650.3 161.9L653.7 162.2L656.6 162.5L659.0 162.8L660.9 163.1L662.2 163.4L663.0 163.8L663.3 164.2L663.3 171.3L663.0 170.9L662.2 170.5L660.9 170.1L659.0 169.7L656.6 169.2L653.7 168.8L650.3 168.3L646.3 167.9L642.0 167.4L637.1 167.0L631.8 166.6L626.1 166.1L620.1 165.7L613.6 165.3L606.8 164.8L599.7 164.4L592.2 164.0L584.6 163.7L576.7 163.3L568.6 162.9L560.3 162.5L551.9 162.2L543.4 161.8L534.8 161.4L526.2 161.1L517.6 160.7L509.0 160.3L500.5 159.9L492.1 159.6L483.8 159.2L475.7 158.8L467.8 158.5L460.2 158.1L452.7 157.8L445.6 157.4L438.8 157.1L432.3 156.7L426.3 156.4L420.6 156.0L415.3 155.7L410.4 155.4L406.1 155.0L402.1 154.7L398.7 154.4L395.8 154.0L393.4 153.7L391.5 153.3L390.2 153.0L389.4 152.6L389.1 152.2Z" fill="#f3f1ec" stroke="#f3f1ec" stroke-width="3.0" stroke-linejoin="round"/>
<path d="M389.1 146.4L389.4 146.7L390.2 147.1L391.5 147.5L393.4 147.9L395.8 148.3L398.7 148.7L402.1 149.1L406.1 149.5L410.4 149.9L415.3 150.3L420.6 150.7L426.3 151.1L432.3 151.4L438.8 151.8L445.6 152.2L452.7 152.6L460.2 153.0L467.8 153.4L475.7 153.7L483.8 154.1L492.1 154.5L500.5 154.8L509.0 155.2L517.6 155.6L526.2 155.9L534.8 156.3L543.4 156.7L551.9 157.1L560.3 157.4L568.6 157.8L576.7 158.1L584.6 158.5L592.2 158.8L599.7 159.2L606.8 159.5L613.6 159.8L620.1 160.1L626.1 160.5L631.8 160.7L637.1 161.0L642.0 161.3L646.3 161.6L650.3 161.9L653.7 162.2L656.6 162.5L659.0 162.8L660.9 163.1L662.2 163.4L663.0 163.8L663.3 164.2L663.3 171.3L663.0 170.9L662.2 170.5L660.9 170.1L659.0 169.7L656.6 169.2L653.7 168.8L650.3 168.3L646.3 167.9L642.0 167.4L637.1 167.0L631.8 166.6L626.1 166.1L620.1 165.7L613.6 165.3L606.8 164.8L599.7 164.4L592.2 164.0L584.6 163.7L576.7 163.3L568.6 162.9L560.3 162.5L551.9 162.2L543.4 161.8L534.8 161.4L526.2 161.1L517.6 160.7L509.0 160.3L500.5 159.9L492.1 159.6L483.8 159.2L475.7 158.8L467.8 158.5L460.2 158.1L452.7 157.8L445.6 157.4L438.8 157.1L432.3 156.7L426.3 156.4L420.6 156.0L415.3 155.7L410.4 155.4L406.1 155.0L402.1 154.7L398.7 154.4L395.8 154.0L393.4 153.7L391.5 153.3L390.2 153.0L389.4 152.6L389.1 152.2Z" fill="url(#gBlue)"/>
<path d="M389.1 146.4L389.4 146.7L390.2 147.1L391.5 147.5L393.4 147.9L395.8 148.3L398.7 148.7L402.1 149.1L406.1 149.5L410.4 149.9L415.3 150.3L420.6 150.7L426.3 151.1L432.3 151.4L438.8 151.8L445.6 152.2L452.7 152.6L460.2 153.0L467.8 153.4L475.7 153.7L483.8 154.1L492.1 154.5L500.5 154.8L509.0 155.2L517.6 155.6L526.2 155.9L534.8 156.3L543.4 156.7L551.9 157.1L560.3 157.4L568.6 157.8L576.7 158.1L584.6 158.5L592.2 158.8L599.7 159.2L606.8 159.5L613.6 159.8L620.1 160.1L626.1 160.5L631.8 160.7L637.1 161.0L642.0 161.3L646.3 161.6L650.3 161.9L653.7 162.2L656.6 162.5L659.0 162.8L660.9 163.1L662.2 163.4L663.0 163.8L663.3 164.2" fill="none" stroke="#3f6cc4" stroke-width="0.8"/>
<path d="M389.1 152.2L389.4 152.6L390.2 153.0L391.5 153.3L393.4 153.7L395.8 154.0L398.7 154.4L402.1 154.7L406.1 155.0L410.4 155.4L415.3 155.7L420.6 156.0L426.3 156.4L432.3 156.7L438.8 157.1L445.6 157.4L452.7 157.8L460.2 158.1L467.8 158.5L475.7 158.8L483.8 159.2L492.1 159.6L500.5 159.9L509.0 160.3L517.6 160.7L526.2 161.1L534.8 161.4L543.4 161.8L551.9 162.2L560.3 162.5L568.6 162.9L576.7 163.3L584.6 163.7L592.2 164.0L599.7 164.4L606.8 164.8L613.6 165.3L620.1 165.7L626.1 166.1L631.8 166.6L637.1 167.0L642.0 167.4L646.3 167.9L650.3 168.3L653.7 168.8L656.6 169.2L659.0 169.7L660.9 170.1L662.2 170.5L663.0 170.9L663.3 171.3" fill="none" stroke="#5580d2" stroke-width="0.7"/>
<path d="M389.1 187.0L389.4 187.3L390.2 187.7L391.5 188.1L393.4 188.5L395.8 188.9L398.7 189.3L402.1 189.7L406.1 190.1L410.4 190.5L415.3 190.9L420.6 191.3L426.3 191.7L432.3 192.0L438.8 192.4L445.6 192.8L452.7 193.2L460.2 193.6L467.8 194.0L475.7 194.3L483.8 194.7L492.1 195.1L500.5 195.4L509.0 195.8L517.6 196.2L526.2 196.5L534.8 196.9L543.4 197.3L551.9 197.7L560.3 198.0L568.6 198.4L576.7 198.7L584.6 199.1L592.2 199.4L599.7 199.8L606.8 200.1L613.6 200.4L620.1 200.7L626.1 201.1L631.8 201.3L637.1 201.6L642.0 201.9L646.3 202.2L650.3 202.5L653.7 202.8L656.6 203.1L659.0 203.4L660.9 203.7L662.2 204.0L663.0 204.4L663.3 204.8L663.3 211.9L663.0 211.5L662.2 211.1L660.9 210.7L659.0 210.3L656.6 209.8L653.7 209.4L650.3 208.9L646.3 208.5L642.0 208.0L637.1 207.6L631.8 207.2L626.1 206.7L620.1 206.3L613.6 205.9L606.8 205.4L599.7 205.0L592.2 204.6L584.6 204.3L576.7 203.9L568.6 203.5L560.3 203.1L551.9 202.8L543.4 202.4L534.8 202.0L526.2 201.7L517.6 201.3L509.0 200.9L500.5 200.5L492.1 200.2L483.8 199.8L475.7 199.4L467.8 199.1L460.2 198.7L452.7 198.4L445.6 198.0L438.8 197.7L432.3 197.3L426.3 197.0L420.6 196.6L415.3 196.3L410.4 196.0L406.1 195.6L402.1 195.3L398.7 195.0L395.8 194.6L393.4 194.3L391.5 193.9L390.2 193.6L389.4 193.2L389.1 192.8Z" fill="#f3f1ec" stroke="#f3f1ec" stroke-width="3.0" stroke-linejoin="round"/>
<path d="M389.1 187.0L389.4 187.3L390.2 187.7L391.5 188.1L393.4 188.5L395.8 188.9L398.7 189.3L402.1 189.7L406.1 190.1L410.4 190.5L415.3 190.9L420.6 191.3L426.3 191.7L432.3 192.0L438.8 192.4L445.6 192.8L452.7 193.2L460.2 193.6L467.8 194.0L475.7 194.3L483.8 194.7L492.1 195.1L500.5 195.4L509.0 195.8L517.6 196.2L526.2 196.5L534.8 196.9L543.4 197.3L551.9 197.7L560.3 198.0L568.6 198.4L576.7 198.7L584.6 199.1L592.2 199.4L599.7 199.8L606.8 200.1L613.6 200.4L620.1 200.7L626.1 201.1L631.8 201.3L637.1 201.6L642.0 201.9L646.3 202.2L650.3 202.5L653.7 202.8L656.6 203.1L659.0 203.4L660.9 203.7L662.2 204.0L663.0 204.4L663.3 204.8L663.3 211.9L663.0 211.5L662.2 211.1L660.9 210.7L659.0 210.3L656.6 209.8L653.7 209.4L650.3 208.9L646.3 208.5L642.0 208.0L637.1 207.6L631.8 207.2L626.1 206.7L620.1 206.3L613.6 205.9L606.8 205.4L599.7 205.0L592.2 204.6L584.6 204.3L576.7 203.9L568.6 203.5L560.3 203.1L551.9 202.8L543.4 202.4L534.8 202.0L526.2 201.7L517.6 201.3L509.0 200.9L500.5 200.5L492.1 200.2L483.8 199.8L475.7 199.4L467.8 199.1L460.2 198.7L452.7 198.4L445.6 198.0L438.8 197.7L432.3 197.3L426.3 197.0L420.6 196.6L415.3 196.3L410.4 196.0L406.1 195.6L402.1 195.3L398.7 195.0L395.8 194.6L393.4 194.3L391.5 193.9L390.2 193.6L389.4 193.2L389.1 192.8Z" fill="url(#gBlue)"/>
<path d="M389.1 187.0L389.4 187.3L390.2 187.7L391.5 188.1L393.4 188.5L395.8 188.9L398.7 189.3L402.1 189.7L406.1 190.1L410.4 190.5L415.3 190.9L420.6 191.3L426.3 191.7L432.3 192.0L438.8 192.4L445.6 192.8L452.7 193.2L460.2 193.6L467.8 194.0L475.7 194.3L483.8 194.7L492.1 195.1L500.5 195.4L509.0 195.8L517.6 196.2L526.2 196.5L534.8 196.9L543.4 197.3L551.9 197.7L560.3 198.0L568.6 198.4L576.7 198.7L584.6 199.1L592.2 199.4L599.7 199.8L606.8 200.1L613.6 200.4L620.1 200.7L626.1 201.1L631.8 201.3L637.1 201.6L642.0 201.9L646.3 202.2L650.3 202.5L653.7 202.8L656.6 203.1L659.0 203.4L660.9 203.7L662.2 204.0L663.0 204.4L663.3 204.8" fill="none" stroke="#3f6cc4" stroke-width="0.8"/>
<path d="M389.1 192.8L389.4 193.2L390.2 193.6L391.5 193.9L393.4 194.3L395.8 194.6L398.7 195.0L402.1 195.3L406.1 195.6L410.4 196.0L415.3 196.3L420.6 196.6L426.3 197.0L432.3 197.3L438.8 197.7L445.6 198.0L452.7 198.4L460.2 198.7L467.8 199.1L475.7 199.4L483.8 199.8L492.1 200.2L500.5 200.5L509.0 200.9L517.6 201.3L526.2 201.7L534.8 202.0L543.4 202.4L551.9 202.8L560.3 203.1L568.6 203.5L576.7 203.9L584.6 204.3L592.2 204.6L599.7 205.0L606.8 205.4L613.6 205.9L620.1 206.3L626.1 206.7L631.8 207.2L637.1 207.6L642.0 208.0L646.3 208.5L650.3 208.9L653.7 209.4L656.6 209.8L659.0 210.3L660.9 210.7L662.2 211.1L663.0 211.5L663.3 211.9" fill="none" stroke="#5580d2" stroke-width="0.7"/>
<path d="M389.1 227.6L389.4 227.9L390.2 228.3L391.5 228.7L393.4 229.1L395.8 229.5L398.7 229.9L402.1 230.3L406.1 230.7L410.4 231.1L415.3 231.5L420.6 231.9L426.3 232.3L432.3 232.6L438.8 233.0L445.6 233.4L452.7 233.8L460.2 234.2L467.8 234.6L475.7 234.9L483.8 235.3L492.1 235.7L500.5 236.0L509.0 236.4L517.6 236.8L526.2 237.1L534.8 237.5L543.4 237.9L551.9 238.3L560.3 238.6L568.6 239.0L576.7 239.3L584.6 239.7L592.2 240.0L599.7 240.4L606.8 240.7L613.6 241.0L620.1 241.3L626.1 241.7L631.8 241.9L637.1 242.2L642.0 242.5L646.3 242.8L650.3 243.1L653.7 243.4L656.6 243.7L659.0 244.0L660.9 244.3L662.2 244.6L663.0 245.0L663.3 245.3L663.3 252.5L663.0 252.1L662.2 251.7L660.9 251.3L659.0 250.9L656.6 250.4L653.7 250.0L650.3 249.5L646.3 249.1L642.0 248.6L637.1 248.2L631.8 247.8L626.1 247.3L620.1 246.9L613.6 246.5L606.8 246.0L599.7 245.6L592.2 245.2L584.6 244.9L576.7 244.5L568.6 244.1L560.3 243.7L551.9 243.4L543.4 243.0L534.8 242.6L526.2 242.2L517.6 241.9L509.0 241.5L500.5 241.1L492.1 240.8L483.8 240.4L475.7 240.0L467.8 239.7L460.2 239.3L452.7 239.0L445.6 238.6L438.8 238.3L432.3 237.9L426.3 237.6L420.6 237.2L415.3 236.9L410.4 236.6L406.1 236.2L402.1 235.9L398.7 235.6L395.8 235.2L393.4 234.9L391.5 234.5L390.2 234.2L389.4 233.8L389.1 233.4Z" fill="#f3f1ec" stroke="#f3f1ec" stroke-width="3.0" stroke-linejoin="round"/>
<path d="M389.1 227.6L389.4 227.9L390.2 228.3L391.5 228.7L393.4 229.1L395.8 229.5L398.7 229.9L402.1 230.3L406.1 230.7L410.4 231.1L415.3 231.5L420.6 231.9L426.3 232.3L432.3 232.6L438.8 233.0L445.6 233.4L452.7 233.8L460.2 234.2L467.8 234.6L475.7 234.9L483.8 235.3L492.1 235.7L500.5 236.0L509.0 236.4L517.6 236.8L526.2 237.1L534.8 237.5L543.4 237.9L551.9 238.3L560.3 238.6L568.6 239.0L576.7 239.3L584.6 239.7L592.2 240.0L599.7 240.4L606.8 240.7L613.6 241.0L620.1 241.3L626.1 241.7L631.8 241.9L637.1 242.2L642.0 242.5L646.3 242.8L650.3 243.1L653.7 243.4L656.6 243.7L659.0 244.0L660.9 244.3L662.2 244.6L663.0 245.0L663.3 245.3L663.3 252.5L663.0 252.1L662.2 251.7L660.9 251.3L659.0 250.9L656.6 250.4L653.7 250.0L650.3 249.5L646.3 249.1L642.0 248.6L637.1 248.2L631.8 247.8L626.1 247.3L620.1 246.9L613.6 246.5L606.8 246.0L599.7 245.6L592.2 245.2L584.6 244.9L576.7 244.5L568.6 244.1L560.3 243.7L551.9 243.4L543.4 243.0L534.8 242.6L526.2 242.2L517.6 241.9L509.0 241.5L500.5 241.1L492.1 240.8L483.8 240.4L475.7 240.0L467.8 239.7L460.2 239.3L452.7 239.0L445.6 238.6L438.8 238.3L432.3 237.9L426.3 237.6L420.6 237.2L415.3 236.9L410.4 236.6L406.1 236.2L402.1 235.9L398.7 235.6L395.8 235.2L393.4 234.9L391.5 234.5L390.2 234.2L389.4 233.8L389.1 233.4Z" fill="url(#gBlue)"/>
<path d="M389.1 227.6L389.4 227.9L390.2 228.3L391.5 228.7L393.4 229.1L395.8 229.5L398.7 229.9L402.1 230.3L406.1 230.7L410.4 231.1L415.3 231.5L420.6 231.9L426.3 232.3L432.3 232.6L438.8 233.0L445.6 233.4L452.7 233.8L460.2 234.2L467.8 234.6L475.7 234.9L483.8 235.3L492.1 235.7L500.5 236.0L509.0 236.4L517.6 236.8L526.2 237.1L534.8 237.5L543.4 237.9L551.9 238.3L560.3 238.6L568.6 239.0L576.7 239.3L584.6 239.7L592.2 240.0L599.7 240.4L606.8 240.7L613.6 241.0L620.1 241.3L626.1 241.7L631.8 241.9L637.1 242.2L642.0 242.5L646.3 242.8L650.3 243.1L653.7 243.4L656.6 243.7L659.0 244.0L660.9 244.3L662.2 244.6L663.0 245.0L663.3 245.3" fill="none" stroke="#3f6cc4" stroke-width="0.8"/>
<path d="M389.1 233.4L389.4 233.8L390.2 234.2L391.5 234.5L393.4 234.9L395.8 235.2L398.7 235.6L402.1 235.9L406.1 236.2L410.4 236.6L415.3 236.9L420.6 237.2L426.3 237.6L432.3 237.9L438.8 238.3L445.6 238.6L452.7 239.0L460.2 239.3L467.8 239.7L475.7 240.0L483.8 240.4L492.1 240.8L500.5 241.1L509.0 241.5L517.6 241.9L526.2 242.2L534.8 242.6L543.4 243.0L551.9 243.4L560.3 243.7L568.6 244.1L576.7 244.5L584.6 244.9L592.2 245.2L599.7 245.6L606.8 246.0L613.6 246.5L620.1 246.9L626.1 247.3L631.8 247.8L637.1 248.2L642.0 248.6L646.3 249.1L650.3 249.5L653.7 250.0L656.6 250.4L659.0 250.9L660.9 251.3L662.2 251.7L663.0 252.1L663.3 252.5" fill="none" stroke="#5580d2" stroke-width="0.7"/>
<path d="M389.1 268.2L389.4 268.5L390.2 268.9L391.5 269.3L393.4 269.7L395.8 270.1L398.7 270.5L402.1 270.9L406.1 271.3L410.4 271.7L415.3 272.1L420.6 272.5L426.3 272.9L432.3 273.2L438.8 273.6L445.6 274.0L452.7 274.4L460.2 274.8L467.8 275.2L475.7 275.5L483.8 275.9L492.1 276.3L500.5 276.6L509.0 277.0L517.6 277.4L526.2 277.8L534.8 278.1L543.4 278.5L551.9 278.9L560.3 279.2L568.6 279.6L576.7 279.9L584.6 280.3L592.2 280.6L599.7 281.0L606.8 281.3L613.6 281.6L620.1 281.9L626.1 282.3L631.8 282.5L637.1 282.8L642.0 283.1L646.3 283.4L650.3 283.7L653.7 284.0L656.6 284.3L659.0 284.6L660.9 284.9L662.2 285.2L663.0 285.6L663.3 285.9L663.3 293.1L663.0 292.7L662.2 292.3L660.9 291.9L659.0 291.5L656.6 291.0L653.7 290.6L650.3 290.1L646.3 289.7L642.0 289.2L637.1 288.8L631.8 288.4L626.1 287.9L620.1 287.5L613.6 287.1L606.8 286.6L599.7 286.2L592.2 285.8L584.6 285.5L576.7 285.1L568.6 284.7L560.3 284.3L551.9 284.0L543.4 283.6L534.8 283.2L526.2 282.9L517.6 282.5L509.0 282.1L500.5 281.7L492.1 281.4L483.8 281.0L475.7 280.6L467.8 280.3L460.2 279.9L452.7 279.6L445.6 279.2L438.8 278.9L432.3 278.5L426.3 278.2L420.6 277.8L415.3 277.5L410.4 277.2L406.1 276.8L402.1 276.5L398.7 276.2L395.8 275.8L393.4 275.5L391.5 275.1L390.2 274.8L389.4 274.4L389.1 274.1Z" fill="#f3f1ec" stroke="#f3f1ec" stroke-width="3.0" stroke-linejoin="round"/>
<path d="M389.1 268.2L389.4 268.5L390.2 268.9L391.5 269.3L393.4 269.7L395.8 270.1L398.7 270.5L402.1 270.9L406.1 271.3L410.4 271.7L415.3 272.1L420.6 272.5L426.3 272.9L432.3 273.2L438.8 273.6L445.6 274.0L452.7 274.4L460.2 274.8L467.8 275.2L475.7 275.5L483.8 275.9L492.1 276.3L500.5 276.6L509.0 277.0L517.6 277.4L526.2 277.8L534.8 278.1L543.4 278.5L551.9 278.9L560.3 279.2L568.6 279.6L576.7 279.9L584.6 280.3L592.2 280.6L599.7 281.0L606.8 281.3L613.6 281.6L620.1 281.9L626.1 282.3L631.8 282.5L637.1 282.8L642.0 283.1L646.3 283.4L650.3 283.7L653.7 284.0L656.6 284.3L659.0 284.6L660.9 284.9L662.2 285.2L663.0 285.6L663.3 285.9L663.3 293.1L663.0 292.7L662.2 292.3L660.9 291.9L659.0 291.5L656.6 291.0L653.7 290.6L650.3 290.1L646.3 289.7L642.0 289.2L637.1 288.8L631.8 288.4L626.1 287.9L620.1 287.5L613.6 287.1L606.8 286.6L599.7 286.2L592.2 285.8L584.6 285.5L576.7 285.1L568.6 284.7L560.3 284.3L551.9 284.0L543.4 283.6L534.8 283.2L526.2 282.9L517.6 282.5L509.0 282.1L500.5 281.7L492.1 281.4L483.8 281.0L475.7 280.6L467.8 280.3L460.2 279.9L452.7 279.6L445.6 279.2L438.8 278.9L432.3 278.5L426.3 278.2L420.6 277.8L415.3 277.5L410.4 277.2L406.1 276.8L402.1 276.5L398.7 276.2L395.8 275.8L393.4 275.5L391.5 275.1L390.2 274.8L389.4 274.4L389.1 274.1Z" fill="url(#gBlue)"/>
<path d="M389.1 268.2L389.4 268.5L390.2 268.9L391.5 269.3L393.4 269.7L395.8 270.1L398.7 270.5L402.1 270.9L406.1 271.3L410.4 271.7L415.3 272.1L420.6 272.5L426.3 272.9L432.3 273.2L438.8 273.6L445.6 274.0L452.7 274.4L460.2 274.8L467.8 275.2L475.7 275.5L483.8 275.9L492.1 276.3L500.5 276.6L509.0 277.0L517.6 277.4L526.2 277.8L534.8 278.1L543.4 278.5L551.9 278.9L560.3 279.2L568.6 279.6L576.7 279.9L584.6 280.3L592.2 280.6L599.7 281.0L606.8 281.3L613.6 281.6L620.1 281.9L626.1 282.3L631.8 282.5L637.1 282.8L642.0 283.1L646.3 283.4L650.3 283.7L653.7 284.0L656.6 284.3L659.0 284.6L660.9 284.9L662.2 285.2L663.0 285.6L663.3 285.9" fill="none" stroke="#3f6cc4" stroke-width="0.8"/>
<path d="M389.1 274.1L389.4 274.4L390.2 274.8L391.5 275.1L393.4 275.5L395.8 275.8L398.7 276.2L402.1 276.5L406.1 276.8L410.4 277.2L415.3 277.5L420.6 277.8L426.3 278.2L432.3 278.5L438.8 278.9L445.6 279.2L452.7 279.6L460.2 279.9L467.8 280.3L475.7 280.6L483.8 281.0L492.1 281.4L500.5 281.7L509.0 282.1L517.6 282.5L526.2 282.9L534.8 283.2L543.4 283.6L551.9 284.0L560.3 284.3L568.6 284.7L576.7 285.1L584.6 285.5L592.2 285.8L599.7 286.2L606.8 286.6L613.6 287.1L620.1 287.5L626.1 287.9L631.8 288.4L637.1 288.8L642.0 289.2L646.3 289.7L650.3 290.1L653.7 290.6L656.6 291.0L659.0 291.5L660.9 291.9L662.2 292.3L663.0 292.7L663.3 293.1" fill="none" stroke="#5580d2" stroke-width="0.7"/>
<path d="M389.1 308.8L389.4 309.1L390.2 309.5L391.5 309.9L393.4 310.3L395.8 310.7L398.7 311.1L402.1 311.5L406.1 311.9L410.4 312.3L415.3 312.7L420.6 313.1L426.3 313.5L432.3 313.8L438.8 314.2L445.6 314.6L452.7 315.0L460.2 315.4L467.8 315.8L475.7 316.1L483.8 316.5L492.1 316.9L500.5 317.2L509.0 317.6L517.6 318.0L526.2 318.4L534.8 318.7L543.4 319.1L551.9 319.5L560.3 319.8L568.6 320.2L576.7 320.5L584.6 320.9L592.2 321.2L599.7 321.6L606.8 321.9L613.6 322.2L620.1 322.5L626.1 322.9L631.8 323.1L637.1 323.4L642.0 323.7L646.3 324.0L650.3 324.3L653.7 324.6L656.6 324.9L659.0 325.2L660.9 325.5L662.2 325.8L663.0 326.2L663.3 326.6L663.3 333.7L663.0 333.3L662.2 332.9L660.9 332.5L659.0 332.1L656.6 331.6L653.7 331.2L650.3 330.7L646.3 330.3L642.0 329.8L637.1 329.4L631.8 329.0L626.1 328.5L620.1 328.1L613.6 327.7L606.8 327.2L599.7 326.8L592.2 326.4L584.6 326.1L576.7 325.7L568.6 325.3L560.3 324.9L551.9 324.6L543.4 324.2L534.8 323.8L526.2 323.5L517.6 323.1L509.0 322.7L500.5 322.3L492.1 322.0L483.8 321.6L475.7 321.2L467.8 320.9L460.2 320.5L452.7 320.2L445.6 319.8L438.8 319.5L432.3 319.1L426.3 318.8L420.6 318.4L415.3 318.1L410.4 317.8L406.1 317.4L402.1 317.1L398.7 316.8L395.8 316.4L393.4 316.1L391.5 315.7L390.2 315.4L389.4 315.0L389.1 314.7Z" fill="#f3f1ec" stroke="#f3f1ec" stroke-width="3.0" stroke-linejoin="round"/>
<path d="M389.1 308.8L389.4 309.1L390.2 309.5L391.5 309.9L393.4 310.3L395.8 310.7L398.7 311.1L402.1 311.5L406.1 311.9L410.4 312.3L415.3 312.7L420.6 313.1L426.3 313.5L432.3 313.8L438.8 314.2L445.6 314.6L452.7 315.0L460.2 315.4L467.8 315.8L475.7 316.1L483.8 316.5L492.1 316.9L500.5 317.2L509.0 317.6L517.6 318.0L526.2 318.4L534.8 318.7L543.4 319.1L551.9 319.5L560.3 319.8L568.6 320.2L576.7 320.5L584.6 320.9L592.2 321.2L599.7 321.6L606.8 321.9L613.6 322.2L620.1 322.5L626.1 322.9L631.8 323.1L637.1 323.4L642.0 323.7L646.3 324.0L650.3 324.3L653.7 324.6L656.6 324.9L659.0 325.2L660.9 325.5L662.2 325.8L663.0 326.2L663.3 326.6L663.3 333.7L663.0 333.3L662.2 332.9L660.9 332.5L659.0 332.1L656.6 331.6L653.7 331.2L650.3 330.7L646.3 330.3L642.0 329.8L637.1 329.4L631.8 329.0L626.1 328.5L620.1 328.1L613.6 327.7L606.8 327.2L599.7 326.8L592.2 326.4L584.6 326.1L576.7 325.7L568.6 325.3L560.3 324.9L551.9 324.6L543.4 324.2L534.8 323.8L526.2 323.5L517.6 323.1L509.0 322.7L500.5 322.3L492.1 322.0L483.8 321.6L475.7 321.2L467.8 320.9L460.2 320.5L452.7 320.2L445.6 319.8L438.8 319.5L432.3 319.1L426.3 318.8L420.6 318.4L415.3 318.1L410.4 317.8L406.1 317.4L402.1 317.1L398.7 316.8L395.8 316.4L393.4 316.1L391.5 315.7L390.2 315.4L389.4 315.0L389.1 314.7Z" fill="url(#gBlue)"/>
<path d="M389.1 308.8L389.4 309.1L390.2 309.5L391.5 309.9L393.4 310.3L395.8 310.7L398.7 311.1L402.1 311.5L406.1 311.9L410.4 312.3L415.3 312.7L420.6 313.1L426.3 313.5L432.3 313.8L438.8 314.2L445.6 314.6L452.7 315.0L460.2 315.4L467.8 315.8L475.7 316.1L483.8 316.5L492.1 316.9L500.5 317.2L509.0 317.6L517.6 318.0L526.2 318.4L534.8 318.7L543.4 319.1L551.9 319.5L560.3 319.8L568.6 320.2L576.7 320.5L584.6 320.9L592.2 321.2L599.7 321.6L606.8 321.9L613.6 322.2L620.1 322.5L626.1 322.9L631.8 323.1L637.1 323.4L642.0 323.7L646.3 324.0L650.3 324.3L653.7 324.6L656.6 324.9L659.0 325.2L660.9 325.5L662.2 325.8L663.0 326.2L663.3 326.6" fill="none" stroke="#3f6cc4" stroke-width="0.8"/>
<path d="M389.1 314.7L389.4 315.0L390.2 315.4L391.5 315.7L393.4 316.1L395.8 316.4L398.7 316.8L402.1 317.1L406.1 317.4L410.4 317.8L415.3 318.1L420.6 318.4L426.3 318.8L432.3 319.1L438.8 319.5L445.6 319.8L452.7 320.2L460.2 320.5L467.8 320.9L475.7 321.2L483.8 321.6L492.1 322.0L500.5 322.3L509.0 322.7L517.6 323.1L526.2 323.5L534.8 323.8L543.4 324.2L551.9 324.6L560.3 324.9L568.6 325.3L576.7 325.7L584.6 326.1L592.2 326.4L599.7 326.8L606.8 327.2L613.6 327.7L620.1 328.1L626.1 328.5L631.8 329.0L637.1 329.4L642.0 329.8L646.3 330.3L650.3 330.7L653.7 331.2L656.6 331.6L659.0 332.1L660.9 332.5L662.2 332.9L663.0 333.3L663.3 333.7" fill="none" stroke="#5580d2" stroke-width="0.7"/>
<path d="M389.1 349.4L389.4 349.7L390.2 350.1L391.5 350.5L393.4 350.9L395.8 351.3L398.7 351.7L402.1 352.1L406.1 352.5L410.4 352.9L415.3 353.3L420.6 353.7L426.3 354.1L432.3 354.4L438.8 354.8L445.6 355.2L452.7 355.6L460.2 356.0L467.8 356.4L475.7 356.7L483.8 357.1L492.1 357.5L500.5 357.8L509.0 358.2L517.6 358.6L526.2 358.9L534.8 359.3L543.4 359.7L551.9 360.1L560.3 360.4L568.6 360.8L576.7 361.1L584.6 361.5L592.2 361.8L599.7 362.2L606.8 362.5L613.6 362.8L620.1 363.1L626.1 363.5L631.8 363.7L637.1 364.0L642.0 364.3L646.3 364.6L650.3 364.9L653.7 365.2L656.6 365.5L659.0 365.8L660.9 366.1L662.2 366.4L663.0 366.8L663.3 367.1L663.3 374.2L663.0 373.9L662.2 373.5L660.9 373.1L659.0 372.7L656.6 372.2L653.7 371.8L650.3 371.3L646.3 370.9L642.0 370.4L637.1 370.0L631.8 369.6L626.1 369.1L620.1 368.7L613.6 368.3L606.8 367.8L599.7 367.4L592.2 367.0L584.6 366.7L576.7 366.3L568.6 365.9L560.3 365.5L551.9 365.2L543.4 364.8L534.8 364.4L526.2 364.1L517.6 363.7L509.0 363.3L500.5 362.9L492.1 362.6L483.8 362.2L475.7 361.8L467.8 361.5L460.2 361.1L452.7 360.8L445.6 360.4L438.8 360.1L432.3 359.7L426.3 359.4L420.6 359.0L415.3 358.7L410.4 358.4L406.1 358.0L402.1 357.7L398.7 357.4L395.8 357.0L393.4 356.7L391.5 356.3L390.2 356.0L389.4 355.6L389.1 355.2Z" fill="#f3f1ec" stroke="#f3f1ec" stroke-width="3.0" stroke-linejoin="round"/>
<path d="M389.1 349.4L389.4 349.7L390.2 350.1L391.5 350.5L393.4 350.9L395.8 351.3L398.7 351.7L402.1 352.1L406.1 352.5L410.4 352.9L415.3 353.3L420.6 353.7L426.3 354.1L432.3 354.4L438.8 354.8L445.6 355.2L452.7 355.6L460.2 356.0L467.8 356.4L475.7 356.7L483.8 357.1L492.1 357.5L500.5 357.8L509.0 358.2L517.6 358.6L526.2 358.9L534.8 359.3L543.4 359.7L551.9 360.1L560.3 360.4L568.6 360.8L576.7 361.1L584.6 361.5L592.2 361.8L599.7 362.2L606.8 362.5L613.6 362.8L620.1 363.1L626.1 363.5L631.8 363.7L637.1 364.0L642.0 364.3L646.3 364.6L650.3 364.9L653.7 365.2L656.6 365.5L659.0 365.8L660.9 366.1L662.2 366.4L663.0 366.8L663.3 367.1L663.3 374.2L663.0 373.9L662.2 373.5L660.9 373.1L659.0 372.7L656.6 372.2L653.7 371.8L650.3 371.3L646.3 370.9L642.0 370.4L637.1 370.0L631.8 369.6L626.1 369.1L620.1 368.7L613.6 368.3L606.8 367.8L599.7 367.4L592.2 367.0L584.6 366.7L576.7 366.3L568.6 365.9L560.3 365.5L551.9 365.2L543.4 364.8L534.8 364.4L526.2 364.1L517.6 363.7L509.0 363.3L500.5 362.9L492.1 362.6L483.8 362.2L475.7 361.8L467.8 361.5L460.2 361.1L452.7 360.8L445.6 360.4L438.8 360.1L432.3 359.7L426.3 359.4L420.6 359.0L415.3 358.7L410.4 358.4L406.1 358.0L402.1 357.7L398.7 357.4L395.8 357.0L393.4 356.7L391.5 356.3L390.2 356.0L389.4 355.6L389.1 355.2Z" fill="url(#gBlue)"/>
<path d="M389.1 349.4L389.4 349.7L390.2 350.1L391.5 350.5L393.4 350.9L395.8 351.3L398.7 351.7L402.1 352.1L406.1 352.5L410.4 352.9L415.3 353.3L420.6 353.7L426.3 354.1L432.3 354.4L438.8 354.8L445.6 355.2L452.7 355.6L460.2 356.0L467.8 356.4L475.7 356.7L483.8 357.1L492.1 357.5L500.5 357.8L509.0 358.2L517.6 358.6L526.2 358.9L534.8 359.3L543.4 359.7L551.9 360.1L560.3 360.4L568.6 360.8L576.7 361.1L584.6 361.5L592.2 361.8L599.7 362.2L606.8 362.5L613.6 362.8L620.1 363.1L626.1 363.5L631.8 363.7L637.1 364.0L642.0 364.3L646.3 364.6L650.3 364.9L653.7 365.2L656.6 365.5L659.0 365.8L660.9 366.1L662.2 366.4L663.0 366.8L663.3 367.1" fill="none" stroke="#3f6cc4" stroke-width="0.8"/>
<path d="M389.1 355.2L389.4 355.6L390.2 356.0L391.5 356.3L393.4 356.7L395.8 357.0L398.7 357.4L402.1 357.7L406.1 358.0L410.4 358.4L415.3 358.7L420.6 359.0L426.3 359.4L432.3 359.7L438.8 360.1L445.6 360.4L452.7 360.8L460.2 361.1L467.8 361.5L475.7 361.8L483.8 362.2L492.1 362.6L500.5 362.9L509.0 363.3L517.6 363.7L526.2 364.1L534.8 364.4L543.4 364.8L551.9 365.2L560.3 365.5L568.6 365.9L576.7 366.3L584.6 366.7L592.2 367.0L599.7 367.4L606.8 367.8L613.6 368.3L620.1 368.7L626.1 369.1L631.8 369.6L637.1 370.0L642.0 370.4L646.3 370.9L650.3 371.3L653.7 371.8L656.6 372.2L659.0 372.7L660.9 373.1L662.2 373.5L663.0 373.9L663.3 374.2" fill="none" stroke="#5580d2" stroke-width="0.7"/>
</g></g>
<path d="M411.8 93H640.2L663.3 116.5H389.1Z" fill="url(#gCham)"/>
<path d="M411 93H641" stroke="#0c0c0c" stroke-width="1.7"/>
<path d="M389.1 116.4H440" stroke="#0c0c0c" stroke-width="1.4"/>
<path d="M618 116.4H663.3" stroke="#0c0c0c" stroke-width="1.4"/>
<path d="M598 116.4H618" stroke="#77756e" stroke-width="1.4"/>
<path d="M440 116.2H598" stroke="#f0eee8" stroke-width="1.6"/>
<text x="526" y="109.2" font-family="Liberation Sans, sans-serif" font-size="18.5" fill="#4b4b4b" text-anchor="middle">5.917</text>
<path d="M522.2 121.6H532.2V138.2H540.6L527.1 159.6L513.8 138.2H522.2Z" fill="url(#gArr)" fill-opacity="0.92" stroke="#363636" stroke-width="1.7" stroke-linejoin="miter"/>
<path d="M521.5 352.8H533V369.6H542L527.25 394.6L512.5 369.6H521.5Z" fill="#e6effa" stroke="#4a74b2" stroke-width="0.9" stroke-linejoin="round"/>
<path d="M524.2 355.4H530.4V371.8H538L527.25 389.6L516.5 371.8H524.2Z" fill="url(#gBArr)"/>
<circle cx="526.8" cy="689.8" r="7.6" fill="#9a9a9a" fill-opacity="0.6"/>
<circle cx="526.6" cy="558.6" r="4.7" fill="#3d3748"/><circle cx="526.6" cy="558.6" r="2.3" fill="#17131d"/>
<circle cx="526.6" cy="686.6" r="4.8" fill="#0b0b0f"/>
</svg>
<div id="dlg">
<div class="hdr"></div>
<svg class="abs" style="left:13px;top:9px" width="13" height="13" viewBox="0 0 13 13"><circle cx="6.4" cy="6.4" r="5.7" fill="#1c1c1c"/><rect x="3" y="5.5" width="6.8" height="1.9" fill="#f0f0f0"/></svg>
<div class="abs" style="left:30.5px;top:6.8px;font-size:13.6px;color:#555;line-height:16px">GWINT</div>
<div class="lbl" style="top:40.4px"><span class="clip">Powierzchnie</span><span class="dots">...</span></div>
<div class="lbl" style="top:77.8px"><span class="clip">Modelowane</span><span class="dots">...</span></div>
<div class="lbl" style="top:115.2px"><span class="clip">Pełna długość</span><span class="dots">...</span></div>
<div class="lbl" style="top:152.7px"><span class="clip">Odsunięcie</span><span class="dots">...</span></div>
<div class="lbl" style="top:190.2px">Długość</div>
<div class="lbl" style="top:227.6px"><span class="clip">Rodzaj gwintu</span><span class="dots">...</span></div>
<div class="lbl" style="top:265.1px">Wielkość</div>
<div class="lbl" style="top:302.6px"><span class="clip">Oznaczenie</span><span class="dots">...</span></div>
<div class="lbl" style="top:340.1px">Klasa</div>
<div class="lbl" style="top:377.5px">Kierunek</div>
<div class="lbl" style="top:415.0px"><span class="clip">Zapamiętaj</span><span class="dots">...</span></div>
<div class="abs" style="left:86px;top:32px;width:100.8px;height:34px;background:#0d96da"></div>
<svg class="abs" style="left:93.4px;top:38px" width="17" height="24" viewBox="0 0 14.8 20.9"><path d="M2 1.5L2 15.2L5.3 12.3L7.8 18L10 17L7.6 11.5L11.8 11.3Z" fill="#f2f2f2" stroke="#666" stroke-width="1.05" stroke-linejoin="round"/></svg>
<div class="abs" style="left:113px;top:40.7px;font-size:13.6px;color:#fff;line-height:18px;white-space:nowrap">1 Wybrane</div>
<svg class="abs" style="left:202px;top:44px" width="11" height="11" viewBox="0 0 11 11"><path d="M1.2 1.2L9.4 9.4M9.4 1.2L1.2 9.4" stroke="#6e6e6e" stroke-width="1.3"/></svg>
<div class="cb" style="top:78.3px"></div>
<svg class="abs" style="left:92.6px;top:78.4px" width="16" height="16" viewBox="0 0 16 16"><path d="M3.2 8.4L6.2 11.6L12.2 3.2" fill="none" stroke="#111" stroke-width="1.8"/></svg>
<div class="cb" style="top:115.7px"></div>
<div class="cb" style="top:415.3px"></div>
<div class="inp" style="top:145.2px;padding-left:2.7px;left:87.0px;height:32px">0.00 mm</div>
<div class="inp" style="top:182.7px;padding-left:2.7px;left:87.0px;height:32px">10.00 mm</div>
<div class="inp" style="top:220.1px;padding-left:8.5px;left:86.2px;height:33px">Metryczne profilowe ISO</div>
<div class="arr" style="top:234.2px"></div>
<div class="inp" style="top:257.6px;padding-left:8.5px;left:86.2px;height:33px">12.0 mm</div>
<div class="arr" style="top:271.7px"></div>
<div class="inp" style="top:295.1px;padding-left:8.5px;left:86.2px;height:33px">M12x1.75</div>
<div class="arr" style="top:309.2px"></div>
<div class="inp" style="top:332.6px;padding-left:8.5px;left:86.2px;height:33px">6g</div>
<div class="arr" style="top:346.7px"></div>
<div class="inp" style="top:370.0px;padding-left:8.5px;left:86.2px;height:33px">Lewy</div>
<div class="arr" style="top:384.1px"></div>
<div class="abs" style="left:0;right:0;top:444px;height:1px;background:#cfcfcf"></div>
<svg class="abs" style="left:9.6px;top:460px" width="16" height="16" viewBox="0 0 16 16"><circle cx="8" cy="8" r="7.2" fill="#111"/><circle cx="8" cy="4.3" r="1.25" fill="#fff"/><path d="M6.3 6.6H9V11.2H10V12.3H6.2V11.2H7.1V7.7H6.3Z" fill="#fff"/></svg>
<div class="abs" style="left:259px;top:454.3px;width:74.5px;height:26.8px;box-sizing:border-box;border:1px solid #adadad;background:#e6e6e6;font-size:15px;color:#4a4a4a;text-align:center;line-height:25px">OK</div>
<div class="abs" style="left:347px;top:454.3px;width:74.5px;height:26.8px;box-sizing:border-box;border:1px solid #adadad;background:#e6e6e6;font-size:15px;color:#4a4a4a;text-align:left;padding-left:15px;line-height:25px;white-space:nowrap">Anuluj</div>
</div>
<div class="abs" style="left:333px;top:54px;width:135px;height:27px;background:#f1f1f1"></div>
<div class="abs" style="left:339px;top:57px;width:3px;height:21px;background:repeating-linear-gradient(#dcdcdc 0 1.5px,#f1f1f1 1.5px 3px)"></div>
<div class="abs" style="left:346px;top:55px;width:1px;height:25px;background:#c9c9c9"></div>
<div class="abs" style="left:351px;top:55px;width:87px;height:25px;box-sizing:border-box;background:#fff;border:1px solid #bdbdbd"></div>
<div class="abs" style="left:363px;top:60px;width:61px;height:17px;background:#0a74d8"></div>
<div class="abs" style="left:423.6px;top:60px;width:1.3px;height:17px;background:#000"></div>
<div class="abs" style="left:363.5px;top:59.5px;font-size:13.8px;color:#fff;line-height:18px;white-space:nowrap">10.00 mm</div>
<div class="abs" style="left:451.3px;top:59.5px;width:3.6px;height:3.6px;border-radius:2px;background:#7b7b7b"></div>
<div class="abs" style="left:451.3px;top:65.7px;width:3.6px;height:3.6px;border-radius:2px;background:#7b7b7b"></div>
<div class="abs" style="left:451.3px;top:71.9px;width:3.6px;height:3.6px;border-radius:2px;background:#7b7b7b"></div>
<div class="abs" style="left:543px;top:360px;width:572.5px;height:22.5px;background:#f2f2f2;border-right:1px solid #e0e0e0;border-bottom:1px solid #e3e3e3;box-sizing:border-box"></div>
<div class="abs" style="left:548.3px;top:362px;font-size:14.85px;color:#0a0a0a;line-height:18px;white-space:nowrap">Określ rozmiar lub przytrzymaj naciśnięty klawisz Ctrl/CMD, aby zmodyfikować wybór</div>
<svg class="abs" style="left:0;top:0" width="1226" height="750" viewBox="0 0 1226 750"><path d="M801.5 216.5C806 212 812 207.8 820 206.6C828 205.6 834 207.6 840 211.5C848 216.6 856 221.8 866 223.6C880 225 900 223.8 920 224.2C935 224.6 948 226 954 228.6C960 232 959.5 238 955.5 243C951 248.5 942 252 928 253.6C905 255 880 253 860 253C845 253 830 253.6 818 250.6C806 247 799 240 796 231C793.6 223 793.5 215.5 797 212C801 209 812 209.6 820 210.2C825.5 210.6 829 211.6 830.8 213.4" fill="none" stroke="#e21b1b" stroke-width="4.7" stroke-linecap="round" stroke-linejoin="round"/></svg>
<div class="abs" style="left:202px;top:734.5px;width:296px;height:20px;background:#f0f0f0"></div>
<svg class="abs" style="left:195px;top:730px" width="320" height="20" viewBox="195 730 320 20">
<path d="M206.3 750C206 746.6 209.5 744.8 211.6 746.4C211 742.6 213.5 740.2 216 740.3C218.8 740.4 220.6 743 219.9 745.6C222.6 744.6 225.4 747 224.8 750" fill="#f7f7f7" stroke="#666" stroke-width="1.1"/>
<path d="M215.7 748.2L217.6 750.4H213.8Z" fill="#1f86e0"/>
<path d="M217.6 742.6L219.3 744.2M220.6 745.2L222.2 746.8" stroke="#444" stroke-width="1.3"/>
<path d="M232.1 748.1h6.8l-3.4 4z" fill="#111"/>
<path d="M370.2 748.1h6.8l-3.4 4z" fill="#111"/>
<path d="M408.2 748.1h6.8l-3.4 4z" fill="#111"/>
<path d="M447.2 748.1h6.8l-3.4 4z" fill="#111"/>
<path d="M485.7 748.1h6.8l-3.4 4z" fill="#111"/>
<path d="M248.6 746L253.4 741.8L260.6 742.8V746Z" fill="#9c9c9c" stroke="#6a6a6a" stroke-width="0.8"/>
<path d="M248 746.6H264.8" stroke="#4a4a4a" stroke-width="1.3"/>
<rect x="248.6" y="747.8" width="15.6" height="4" fill="#e6e6e6" stroke="#6a6a6a" stroke-width="1"/>
<rect x="250.4" y="749.2" width="12" height="3" fill="#5a5a5a"/>
<path d="M284.6 750.5V743C284.6 741 287.6 741 287.6 743V750.5M288.4 750.5V741.4C288.4 739.6 291.4 739.6 291.4 741.4V750.5M292.2 750.5V742.4C292.2 740.6 295.2 740.6 295.2 742.4V750.5M296 750.5V745.2C296 743.6 298.6 743.6 298.4 745.4L297.8 750.5M284.6 749.6L282 748.6H279.8" fill="#fff" stroke="#5c5c5c" stroke-width="0.95" stroke-linecap="round" stroke-linejoin="round"/>
<circle cx="318.6" cy="747.4" r="6.7" fill="#e6efee" stroke="#808080" stroke-width="1.2"/>
<path d="M315 743.6C316.8 741.8 320 741.6 322 743" fill="none" stroke="#fff" stroke-width="1.3"/>
<path d="M326.6 742.4H331M328.8 740.2V744.6M326.6 746.2H331" stroke="#3c3c3c" stroke-width="1"/>
<path d="M356 741.2H362.6V751" fill="none" stroke="#a8a8a8" stroke-width="1" stroke-dasharray="2.2 1.2"/>
<circle cx="351.6" cy="748" r="6.9" fill="#e6efee" stroke="#808080" stroke-width="1.2"/>
<rect x="386.4" y="740.4" width="18" height="12" fill="#fbfbfb" stroke="#5a5a5a" stroke-width="1.2"/>
<rect x="388.8" y="742.6" width="13.4" height="9" fill="#7fa5de" stroke="#4468a6" stroke-width="0.9"/>
<rect x="424.4" y="741.2" width="19" height="10" fill="#fafafa"/>
<path d="M424.80 741.4V751M427.42 741.4V751M430.04 741.4V751M432.66 741.4V751M435.28 741.4V751M437.90 741.4V751M440.52 741.4V751M443.14 741.4V751M424.4 741.60H443.4M424.4 743.80H443.4M424.4 746.00H443.4M424.4 748.20H443.4M424.4 750.40H443.4" stroke="#a9a9a9" stroke-width="0.75" fill="none"/>
<path d="M424.4 741.5H443.4V751" stroke="#5e5e5e" stroke-width="1" fill="none"/>
<rect x="463.8" y="742.6" width="17.4" height="10" fill="#7d9fd8" stroke="#3d5a94" stroke-width="1.4"/>
<path d="M472.4 742.6V751M463.8 749.7H481.2" stroke="#3d5a94" stroke-width="1.3"/>
</svg>
<div class="abs" style="left:1219px;top:27px;width:12px;height:52px;background:linear-gradient(90deg,#e9e9e9,#c9c9c9);border:1px solid #8a8a8a;box-shadow:-2px 3px 5px rgba(0,0,0,.3)"></div>
<div class="abs" style="left:1219.5px;top:11px;font-size:15px;color:#6d6dfa;line-height:16px">Z</div>
<svg class="abs" style="left:1208px;top:72px" width="18" height="20" viewBox="1208 72 18 20"><path d="M1213.2 77.4L1219.6 87.6M1219.6 77.4L1213.2 87.6" stroke="#f48a8a" stroke-width="1.9" fill="none"/></svg>
</div>
</body></html>
